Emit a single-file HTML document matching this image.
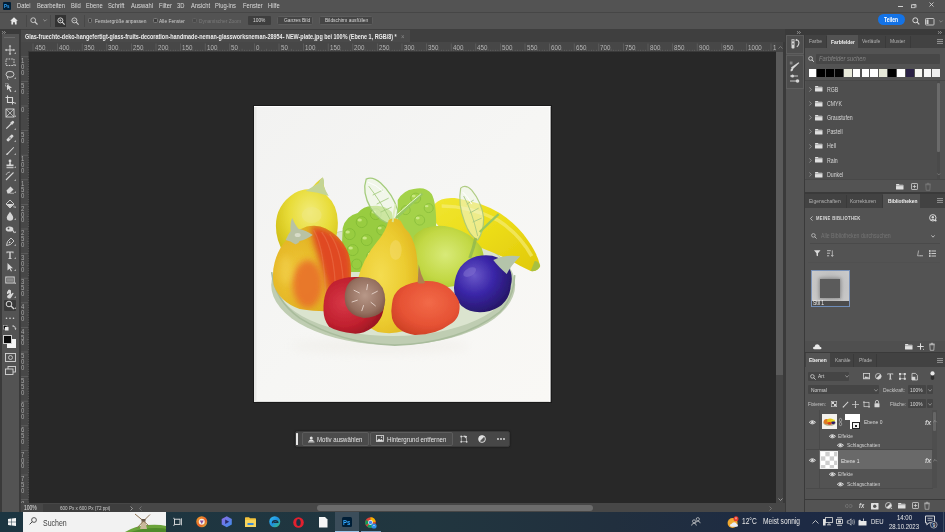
<!DOCTYPE html>
<html><head><meta charset="utf-8">
<style>
*{box-sizing:border-box;margin:0;padding:0}
html,body{width:945px;height:532px;overflow:hidden;background:#282828;font-family:"Liberation Sans",sans-serif;color:#ddd}
.a{position:absolute}
.t{position:absolute;white-space:nowrap;transform:scale(0.1);transform-origin:0 0}
svg{overflow:visible}
</style></head><body>
<div class="a" style="left:0px;top:0px;width:945px;height:12.5px;background:#535353;"></div>
<div class="a" style="left:0px;top:11.8px;width:945px;height:0.9px;background:#464646;"></div>
<div class="a" style="left:2.5px;top:2px;width:8px;height:8px;background:#001e36;border-radius:1px"></div>
<div class="t" style="left:3.6px;top:2.94px;font-size:56.4px;line-height:56.4px;color:#31a8ff;font-weight:bold;transform:scale(0.0780,0.1);">Ps</div>
<div class="t" style="left:16.9px;top:2.47px;font-size:74.4px;line-height:74.4px;color:#dcdcdc;font-weight:normal;transform:scale(0.0780,0.1);">Datei</div>
<div class="t" style="left:36.9px;top:2.47px;font-size:74.4px;line-height:74.4px;color:#dcdcdc;font-weight:normal;transform:scale(0.0780,0.1);">Bearbeiten</div>
<div class="t" style="left:70.8px;top:2.47px;font-size:74.4px;line-height:74.4px;color:#dcdcdc;font-weight:normal;transform:scale(0.0780,0.1);">Bild</div>
<div class="t" style="left:86.4px;top:2.47px;font-size:74.4px;line-height:74.4px;color:#dcdcdc;font-weight:normal;transform:scale(0.0780,0.1);">Ebene</div>
<div class="t" style="left:108.4px;top:2.47px;font-size:74.4px;line-height:74.4px;color:#dcdcdc;font-weight:normal;transform:scale(0.0780,0.1);">Schrift</div>
<div class="t" style="left:130.7px;top:2.47px;font-size:74.4px;line-height:74.4px;color:#dcdcdc;font-weight:normal;transform:scale(0.0780,0.1);">Auswahl</div>
<div class="t" style="left:158.5px;top:2.47px;font-size:74.4px;line-height:74.4px;color:#dcdcdc;font-weight:normal;transform:scale(0.0780,0.1);">Filter</div>
<div class="t" style="left:177px;top:2.47px;font-size:74.4px;line-height:74.4px;color:#dcdcdc;font-weight:normal;transform:scale(0.0780,0.1);">3D</div>
<div class="t" style="left:190.6px;top:2.47px;font-size:74.4px;line-height:74.4px;color:#dcdcdc;font-weight:normal;transform:scale(0.0780,0.1);">Ansicht</div>
<div class="t" style="left:215.2px;top:2.47px;font-size:74.4px;line-height:74.4px;color:#dcdcdc;font-weight:normal;transform:scale(0.0780,0.1);">Plug-ins</div>
<div class="t" style="left:242.8px;top:2.47px;font-size:74.4px;line-height:74.4px;color:#dcdcdc;font-weight:normal;transform:scale(0.0780,0.1);">Fenster</div>
<div class="t" style="left:267.7px;top:2.47px;font-size:74.4px;line-height:74.4px;color:#dcdcdc;font-weight:normal;transform:scale(0.0780,0.1);">Hilfe</div>
<div class="a" style="left:897.5px;top:5.5px;width:5px;height:1px;background:#d0d0d0;"></div>
<svg class="a" style="left:910.5px;top:2.5px;" width="6" height="5" viewBox="0 0 6 5"><path d="M1.5 1.5h3.5v3" fill="none" stroke="#d0d0d0" stroke-width="0.8"/><rect x="0.4" y="1.9" width="3.6" height="2.8" fill="none" stroke="#d0d0d0" stroke-width="0.8"/></svg>
<svg class="a" style="left:929px;top:2px;" width="5" height="5" viewBox="0 0 5 5"><path d="M0.5 0.5L4.5 4.5M4.5 0.5L0.5 4.5" stroke="#d0d0d0" stroke-width="0.9"/></svg>
<div class="a" style="left:0px;top:12.7px;width:945px;height:16.3px;background:#535353;"></div>
<div class="a" style="left:0px;top:28.5px;width:945px;height:1px;background:#3a3a3a;"></div>
<svg class="a" style="left:9.5px;top:16.5px;" width="8" height="8" viewBox="0 0 8 8"><path d="M4 0.3L7.8 3.8H6.6V7.6H4.9V5.2H3.1V7.6H1.4V3.8H0.2Z" fill="#e8e8e8"/></svg>
<div class="a" style="left:25.5px;top:15px;width:1px;height:12px;background:#484848;"></div>
<svg class="a" style="left:30px;top:16.5px;" width="8" height="8" viewBox="0 0 8 8"><circle cx="3.2" cy="3.2" r="2.4" fill="none" stroke="#cfcfcf" stroke-width="0.9"/><path d="M5 5L7.5 7.5" stroke="#cfcfcf" stroke-width="1.1"/></svg>
<svg class="a" style="left:42.5px;top:19px;" width="4" height="3" viewBox="0 0 4 3"><path d="M0.3 0.5L2 2.2L3.7 0.5" fill="none" stroke="#aaa" stroke-width="0.7"/></svg>
<div class="a" style="left:50px;top:15px;width:1px;height:12px;background:#484848;"></div>
<div class="a" style="left:54.5px;top:15px;width:11.5px;height:11.5px;background:#333333;"></div>
<svg class="a" style="left:56.5px;top:17px;" width="8" height="8" viewBox="0 0 8 8"><circle cx="3.4" cy="3.4" r="2.5" fill="none" stroke="#dcdcdc" stroke-width="0.9"/><path d="M5.2 5.2L7.6 7.6" stroke="#dcdcdc" stroke-width="1.1"/><path d="M2.2 3.4H4.6M3.4 2.2V4.6" stroke="#dcdcdc" stroke-width="0.6"/></svg>
<svg class="a" style="left:71px;top:17px;" width="8" height="8" viewBox="0 0 8 8"><circle cx="3.4" cy="3.4" r="2.5" fill="none" stroke="#cfcfcf" stroke-width="0.9"/><path d="M5.2 5.2L7.6 7.6" stroke="#cfcfcf" stroke-width="1.1"/><path d="M2.2 3.4H4.6" stroke="#cfcfcf" stroke-width="0.6"/></svg>
<div class="a" style="left:83.5px;top:15px;width:1px;height:12px;background:#484848;"></div>
<div class="a" style="left:87.6px;top:18px;width:4.8px;height:5px;border:0.7px solid #7a7a7a;border-radius:1.4px;background:#3e3e3e"></div>
<div class="t" style="left:94.5px;top:17.76px;font-size:62.2px;line-height:62.2px;color:#cfcfcf;font-weight:normal;transform:scale(0.0780,0.1);">Fenstergröße anpassen</div>
<div class="a" style="left:152.8px;top:18px;width:4.8px;height:5px;border:0.7px solid #7a7a7a;border-radius:1.4px;background:#3e3e3e"></div>
<div class="t" style="left:159px;top:17.76px;font-size:62.2px;line-height:62.2px;color:#cfcfcf;font-weight:normal;transform:scale(0.0780,0.1);">Alle Fenster</div>
<div class="a" style="left:192.2px;top:18px;width:4.8px;height:5px;border:0.7px solid #606060;border-radius:1.4px;background:#4a4a4a"></div>
<div class="t" style="left:198.5px;top:17.76px;font-size:62.2px;line-height:62.2px;color:#7a7a7a;font-weight:normal;transform:scale(0.0780,0.1);">Dynamischer Zoom</div>
<div class="a" style="left:247.5px;top:16.3px;width:23.5px;height:9px;background:#3e3e3e;border-radius:1px"></div>
<div class="t" style="left:252.8px;top:17.26px;font-size:62.2px;line-height:62.2px;color:#d8d8d8;font-weight:normal;transform:scale(0.0780,0.1);">100%</div>
<div class="a" style="left:276.8px;top:16.3px;width:36.7px;height:9px;background:#454545;border:0.6px solid #5c5c5c;border-radius:1.5px"></div>
<div class="t" style="left:283.5px;top:17.26px;font-size:62.2px;line-height:62.2px;color:#d8d8d8;font-weight:normal;transform:scale(0.0780,0.1);">Ganzes Bild</div>
<div class="a" style="left:319px;top:16.3px;width:53.7px;height:9px;background:#454545;border:0.6px solid #5c5c5c;border-radius:1.5px"></div>
<div class="t" style="left:324.5px;top:17.26px;font-size:62.2px;line-height:62.2px;color:#d8d8d8;font-weight:normal;transform:scale(0.0780,0.1);">Bildschirm ausfüllen</div>
<div class="a" style="left:878px;top:14px;width:27.2px;height:11.4px;background:#1473e6;border-radius:6px"></div>
<div class="t" style="left:884.3px;top:16.77px;font-size:64.1px;line-height:64.1px;color:#ffffff;font-weight:bold;transform:scale(0.0780,0.1);">Teilen</div>
<svg class="a" style="left:911.5px;top:16.5px;" width="8" height="8" viewBox="0 0 8 8"><circle cx="3.3" cy="3.3" r="2.5" fill="none" stroke="#d8d8d8" stroke-width="1"/><path d="M5.1 5.1L7.3 7.3" stroke="#d8d8d8" stroke-width="1.2"/></svg>
<svg class="a" style="left:925px;top:17.5px;" width="9.5" height="7.5" viewBox="0 0 9.5 7.5"><rect x="0.5" y="0.5" width="8.5" height="6.5" rx="0.8" fill="none" stroke="#cfcfcf" stroke-width="0.9"/><rect x="1.5" y="1.5" width="2" height="4.5" fill="#cfcfcf"/></svg>
<svg class="a" style="left:938.5px;top:19.5px;" width="4" height="3" viewBox="0 0 4 3"><path d="M0.3 0.5L2 2.2L3.7 0.5" fill="none" stroke="#9a9a9a" stroke-width="0.7"/></svg>
<div class="a" style="left:20px;top:29px;width:765px;height:13px;background:#3f3f3f;"></div>
<div class="a" style="left:21px;top:29.5px;width:389px;height:12.5px;background:#4a4a4a;"></div>
<div class="t" style="left:25.3px;top:33.19px;font-size:69.7px;line-height:69.7px;color:#ececec;font-weight:bold;transform:scale(0.0780,0.1);">Glas-fruechte-deko-hangefertigt-glass-fruits-decoration-handmade-neman-glassworksneman-28954-&nbsp;NEW-plate.jpg bei 100% (Ebene 1, RGB/8) *</div>
<div class="t" style="left:400.5px;top:32.04px;font-size:76.9px;line-height:76.9px;color:#8a8a8a;font-weight:normal;transform:scale(0.0780,0.1);">×</div>
<div class="a" style="left:20px;top:42px;width:756px;height:10px;background:#474747;"></div>
<div class="a" style="left:20px;top:42px;width:9px;height:462px;background:#474747;"></div>
<div class="a" style="left:29px;top:51px;width:747px;height:1px;background:#3a3a3a;"></div>
<div class="a" style="left:28px;top:51px;width:1px;height:453px;background:#3a3a3a;"></div>
<svg class="a" style="left:0;top:0" width="945" height="532"><rect x="32.60" y="43.5" width="0.8" height="7.5" fill="#606060"/><rect x="35.06" y="49.8" width="0.7" height="1.2" fill="#626262"/><rect x="37.52" y="49.8" width="0.7" height="1.2" fill="#626262"/><rect x="39.98" y="49.8" width="0.7" height="1.2" fill="#626262"/><rect x="42.44" y="49.8" width="0.7" height="1.2" fill="#626262"/><rect x="44.90" y="48.8" width="0.7" height="2.2" fill="#626262"/><rect x="47.36" y="49.8" width="0.7" height="1.2" fill="#626262"/><rect x="49.82" y="49.8" width="0.7" height="1.2" fill="#626262"/><rect x="52.28" y="49.8" width="0.7" height="1.2" fill="#626262"/><rect x="54.74" y="49.8" width="0.7" height="1.2" fill="#626262"/><rect x="57.20" y="43.5" width="0.8" height="7.5" fill="#606060"/><rect x="59.66" y="49.8" width="0.7" height="1.2" fill="#626262"/><rect x="62.12" y="49.8" width="0.7" height="1.2" fill="#626262"/><rect x="64.58" y="49.8" width="0.7" height="1.2" fill="#626262"/><rect x="67.04" y="49.8" width="0.7" height="1.2" fill="#626262"/><rect x="69.50" y="48.8" width="0.7" height="2.2" fill="#626262"/><rect x="71.96" y="49.8" width="0.7" height="1.2" fill="#626262"/><rect x="74.42" y="49.8" width="0.7" height="1.2" fill="#626262"/><rect x="76.88" y="49.8" width="0.7" height="1.2" fill="#626262"/><rect x="79.34" y="49.8" width="0.7" height="1.2" fill="#626262"/><rect x="81.80" y="43.5" width="0.8" height="7.5" fill="#606060"/><rect x="84.26" y="49.8" width="0.7" height="1.2" fill="#626262"/><rect x="86.72" y="49.8" width="0.7" height="1.2" fill="#626262"/><rect x="89.18" y="49.8" width="0.7" height="1.2" fill="#626262"/><rect x="91.64" y="49.8" width="0.7" height="1.2" fill="#626262"/><rect x="94.10" y="48.8" width="0.7" height="2.2" fill="#626262"/><rect x="96.56" y="49.8" width="0.7" height="1.2" fill="#626262"/><rect x="99.02" y="49.8" width="0.7" height="1.2" fill="#626262"/><rect x="101.48" y="49.8" width="0.7" height="1.2" fill="#626262"/><rect x="103.94" y="49.8" width="0.7" height="1.2" fill="#626262"/><rect x="106.40" y="43.5" width="0.8" height="7.5" fill="#606060"/><rect x="108.86" y="49.8" width="0.7" height="1.2" fill="#626262"/><rect x="111.32" y="49.8" width="0.7" height="1.2" fill="#626262"/><rect x="113.78" y="49.8" width="0.7" height="1.2" fill="#626262"/><rect x="116.24" y="49.8" width="0.7" height="1.2" fill="#626262"/><rect x="118.70" y="48.8" width="0.7" height="2.2" fill="#626262"/><rect x="121.16" y="49.8" width="0.7" height="1.2" fill="#626262"/><rect x="123.62" y="49.8" width="0.7" height="1.2" fill="#626262"/><rect x="126.08" y="49.8" width="0.7" height="1.2" fill="#626262"/><rect x="128.54" y="49.8" width="0.7" height="1.2" fill="#626262"/><rect x="131.00" y="43.5" width="0.8" height="7.5" fill="#606060"/><rect x="133.46" y="49.8" width="0.7" height="1.2" fill="#626262"/><rect x="135.92" y="49.8" width="0.7" height="1.2" fill="#626262"/><rect x="138.38" y="49.8" width="0.7" height="1.2" fill="#626262"/><rect x="140.84" y="49.8" width="0.7" height="1.2" fill="#626262"/><rect x="143.30" y="48.8" width="0.7" height="2.2" fill="#626262"/><rect x="145.76" y="49.8" width="0.7" height="1.2" fill="#626262"/><rect x="148.22" y="49.8" width="0.7" height="1.2" fill="#626262"/><rect x="150.68" y="49.8" width="0.7" height="1.2" fill="#626262"/><rect x="153.14" y="49.8" width="0.7" height="1.2" fill="#626262"/><rect x="155.60" y="43.5" width="0.8" height="7.5" fill="#606060"/><rect x="158.06" y="49.8" width="0.7" height="1.2" fill="#626262"/><rect x="160.52" y="49.8" width="0.7" height="1.2" fill="#626262"/><rect x="162.98" y="49.8" width="0.7" height="1.2" fill="#626262"/><rect x="165.44" y="49.8" width="0.7" height="1.2" fill="#626262"/><rect x="167.90" y="48.8" width="0.7" height="2.2" fill="#626262"/><rect x="170.36" y="49.8" width="0.7" height="1.2" fill="#626262"/><rect x="172.82" y="49.8" width="0.7" height="1.2" fill="#626262"/><rect x="175.28" y="49.8" width="0.7" height="1.2" fill="#626262"/><rect x="177.74" y="49.8" width="0.7" height="1.2" fill="#626262"/><rect x="180.20" y="43.5" width="0.8" height="7.5" fill="#606060"/><rect x="182.66" y="49.8" width="0.7" height="1.2" fill="#626262"/><rect x="185.12" y="49.8" width="0.7" height="1.2" fill="#626262"/><rect x="187.58" y="49.8" width="0.7" height="1.2" fill="#626262"/><rect x="190.04" y="49.8" width="0.7" height="1.2" fill="#626262"/><rect x="192.50" y="48.8" width="0.7" height="2.2" fill="#626262"/><rect x="194.96" y="49.8" width="0.7" height="1.2" fill="#626262"/><rect x="197.42" y="49.8" width="0.7" height="1.2" fill="#626262"/><rect x="199.88" y="49.8" width="0.7" height="1.2" fill="#626262"/><rect x="202.34" y="49.8" width="0.7" height="1.2" fill="#626262"/><rect x="204.80" y="43.5" width="0.8" height="7.5" fill="#606060"/><rect x="207.26" y="49.8" width="0.7" height="1.2" fill="#626262"/><rect x="209.72" y="49.8" width="0.7" height="1.2" fill="#626262"/><rect x="212.18" y="49.8" width="0.7" height="1.2" fill="#626262"/><rect x="214.64" y="49.8" width="0.7" height="1.2" fill="#626262"/><rect x="217.10" y="48.8" width="0.7" height="2.2" fill="#626262"/><rect x="219.56" y="49.8" width="0.7" height="1.2" fill="#626262"/><rect x="222.02" y="49.8" width="0.7" height="1.2" fill="#626262"/><rect x="224.48" y="49.8" width="0.7" height="1.2" fill="#626262"/><rect x="226.94" y="49.8" width="0.7" height="1.2" fill="#626262"/><rect x="229.40" y="43.5" width="0.8" height="7.5" fill="#606060"/><rect x="231.86" y="49.8" width="0.7" height="1.2" fill="#626262"/><rect x="234.32" y="49.8" width="0.7" height="1.2" fill="#626262"/><rect x="236.78" y="49.8" width="0.7" height="1.2" fill="#626262"/><rect x="239.24" y="49.8" width="0.7" height="1.2" fill="#626262"/><rect x="241.70" y="48.8" width="0.7" height="2.2" fill="#626262"/><rect x="244.16" y="49.8" width="0.7" height="1.2" fill="#626262"/><rect x="246.62" y="49.8" width="0.7" height="1.2" fill="#626262"/><rect x="249.08" y="49.8" width="0.7" height="1.2" fill="#626262"/><rect x="251.54" y="49.8" width="0.7" height="1.2" fill="#626262"/><rect x="254.00" y="43.5" width="0.8" height="7.5" fill="#606060"/><rect x="256.46" y="49.8" width="0.7" height="1.2" fill="#626262"/><rect x="258.92" y="49.8" width="0.7" height="1.2" fill="#626262"/><rect x="261.38" y="49.8" width="0.7" height="1.2" fill="#626262"/><rect x="263.84" y="49.8" width="0.7" height="1.2" fill="#626262"/><rect x="266.30" y="48.8" width="0.7" height="2.2" fill="#626262"/><rect x="268.76" y="49.8" width="0.7" height="1.2" fill="#626262"/><rect x="271.22" y="49.8" width="0.7" height="1.2" fill="#626262"/><rect x="273.68" y="49.8" width="0.7" height="1.2" fill="#626262"/><rect x="276.14" y="49.8" width="0.7" height="1.2" fill="#626262"/><rect x="278.60" y="43.5" width="0.8" height="7.5" fill="#606060"/><rect x="281.06" y="49.8" width="0.7" height="1.2" fill="#626262"/><rect x="283.52" y="49.8" width="0.7" height="1.2" fill="#626262"/><rect x="285.98" y="49.8" width="0.7" height="1.2" fill="#626262"/><rect x="288.44" y="49.8" width="0.7" height="1.2" fill="#626262"/><rect x="290.90" y="48.8" width="0.7" height="2.2" fill="#626262"/><rect x="293.36" y="49.8" width="0.7" height="1.2" fill="#626262"/><rect x="295.82" y="49.8" width="0.7" height="1.2" fill="#626262"/><rect x="298.28" y="49.8" width="0.7" height="1.2" fill="#626262"/><rect x="300.74" y="49.8" width="0.7" height="1.2" fill="#626262"/><rect x="303.20" y="43.5" width="0.8" height="7.5" fill="#606060"/><rect x="305.66" y="49.8" width="0.7" height="1.2" fill="#626262"/><rect x="308.12" y="49.8" width="0.7" height="1.2" fill="#626262"/><rect x="310.58" y="49.8" width="0.7" height="1.2" fill="#626262"/><rect x="313.04" y="49.8" width="0.7" height="1.2" fill="#626262"/><rect x="315.50" y="48.8" width="0.7" height="2.2" fill="#626262"/><rect x="317.96" y="49.8" width="0.7" height="1.2" fill="#626262"/><rect x="320.42" y="49.8" width="0.7" height="1.2" fill="#626262"/><rect x="322.88" y="49.8" width="0.7" height="1.2" fill="#626262"/><rect x="325.34" y="49.8" width="0.7" height="1.2" fill="#626262"/><rect x="327.80" y="43.5" width="0.8" height="7.5" fill="#606060"/><rect x="330.26" y="49.8" width="0.7" height="1.2" fill="#626262"/><rect x="332.72" y="49.8" width="0.7" height="1.2" fill="#626262"/><rect x="335.18" y="49.8" width="0.7" height="1.2" fill="#626262"/><rect x="337.64" y="49.8" width="0.7" height="1.2" fill="#626262"/><rect x="340.10" y="48.8" width="0.7" height="2.2" fill="#626262"/><rect x="342.56" y="49.8" width="0.7" height="1.2" fill="#626262"/><rect x="345.02" y="49.8" width="0.7" height="1.2" fill="#626262"/><rect x="347.48" y="49.8" width="0.7" height="1.2" fill="#626262"/><rect x="349.94" y="49.8" width="0.7" height="1.2" fill="#626262"/><rect x="352.40" y="43.5" width="0.8" height="7.5" fill="#606060"/><rect x="354.86" y="49.8" width="0.7" height="1.2" fill="#626262"/><rect x="357.32" y="49.8" width="0.7" height="1.2" fill="#626262"/><rect x="359.78" y="49.8" width="0.7" height="1.2" fill="#626262"/><rect x="362.24" y="49.8" width="0.7" height="1.2" fill="#626262"/><rect x="364.70" y="48.8" width="0.7" height="2.2" fill="#626262"/><rect x="367.16" y="49.8" width="0.7" height="1.2" fill="#626262"/><rect x="369.62" y="49.8" width="0.7" height="1.2" fill="#626262"/><rect x="372.08" y="49.8" width="0.7" height="1.2" fill="#626262"/><rect x="374.54" y="49.8" width="0.7" height="1.2" fill="#626262"/><rect x="377.00" y="43.5" width="0.8" height="7.5" fill="#606060"/><rect x="379.46" y="49.8" width="0.7" height="1.2" fill="#626262"/><rect x="381.92" y="49.8" width="0.7" height="1.2" fill="#626262"/><rect x="384.38" y="49.8" width="0.7" height="1.2" fill="#626262"/><rect x="386.84" y="49.8" width="0.7" height="1.2" fill="#626262"/><rect x="389.30" y="48.8" width="0.7" height="2.2" fill="#626262"/><rect x="391.76" y="49.8" width="0.7" height="1.2" fill="#626262"/><rect x="394.22" y="49.8" width="0.7" height="1.2" fill="#626262"/><rect x="396.68" y="49.8" width="0.7" height="1.2" fill="#626262"/><rect x="399.14" y="49.8" width="0.7" height="1.2" fill="#626262"/><rect x="401.60" y="43.5" width="0.8" height="7.5" fill="#606060"/><rect x="404.06" y="49.8" width="0.7" height="1.2" fill="#626262"/><rect x="406.52" y="49.8" width="0.7" height="1.2" fill="#626262"/><rect x="408.98" y="49.8" width="0.7" height="1.2" fill="#626262"/><rect x="411.44" y="49.8" width="0.7" height="1.2" fill="#626262"/><rect x="413.90" y="48.8" width="0.7" height="2.2" fill="#626262"/><rect x="416.36" y="49.8" width="0.7" height="1.2" fill="#626262"/><rect x="418.82" y="49.8" width="0.7" height="1.2" fill="#626262"/><rect x="421.28" y="49.8" width="0.7" height="1.2" fill="#626262"/><rect x="423.74" y="49.8" width="0.7" height="1.2" fill="#626262"/><rect x="426.20" y="43.5" width="0.8" height="7.5" fill="#606060"/><rect x="428.66" y="49.8" width="0.7" height="1.2" fill="#626262"/><rect x="431.12" y="49.8" width="0.7" height="1.2" fill="#626262"/><rect x="433.58" y="49.8" width="0.7" height="1.2" fill="#626262"/><rect x="436.04" y="49.8" width="0.7" height="1.2" fill="#626262"/><rect x="438.50" y="48.8" width="0.7" height="2.2" fill="#626262"/><rect x="440.96" y="49.8" width="0.7" height="1.2" fill="#626262"/><rect x="443.42" y="49.8" width="0.7" height="1.2" fill="#626262"/><rect x="445.88" y="49.8" width="0.7" height="1.2" fill="#626262"/><rect x="448.34" y="49.8" width="0.7" height="1.2" fill="#626262"/><rect x="450.80" y="43.5" width="0.8" height="7.5" fill="#606060"/><rect x="453.26" y="49.8" width="0.7" height="1.2" fill="#626262"/><rect x="455.72" y="49.8" width="0.7" height="1.2" fill="#626262"/><rect x="458.18" y="49.8" width="0.7" height="1.2" fill="#626262"/><rect x="460.64" y="49.8" width="0.7" height="1.2" fill="#626262"/><rect x="463.10" y="48.8" width="0.7" height="2.2" fill="#626262"/><rect x="465.56" y="49.8" width="0.7" height="1.2" fill="#626262"/><rect x="468.02" y="49.8" width="0.7" height="1.2" fill="#626262"/><rect x="470.48" y="49.8" width="0.7" height="1.2" fill="#626262"/><rect x="472.94" y="49.8" width="0.7" height="1.2" fill="#626262"/><rect x="475.40" y="43.5" width="0.8" height="7.5" fill="#606060"/><rect x="477.86" y="49.8" width="0.7" height="1.2" fill="#626262"/><rect x="480.32" y="49.8" width="0.7" height="1.2" fill="#626262"/><rect x="482.78" y="49.8" width="0.7" height="1.2" fill="#626262"/><rect x="485.24" y="49.8" width="0.7" height="1.2" fill="#626262"/><rect x="487.70" y="48.8" width="0.7" height="2.2" fill="#626262"/><rect x="490.16" y="49.8" width="0.7" height="1.2" fill="#626262"/><rect x="492.62" y="49.8" width="0.7" height="1.2" fill="#626262"/><rect x="495.08" y="49.8" width="0.7" height="1.2" fill="#626262"/><rect x="497.54" y="49.8" width="0.7" height="1.2" fill="#626262"/><rect x="500.00" y="43.5" width="0.8" height="7.5" fill="#606060"/><rect x="502.46" y="49.8" width="0.7" height="1.2" fill="#626262"/><rect x="504.92" y="49.8" width="0.7" height="1.2" fill="#626262"/><rect x="507.38" y="49.8" width="0.7" height="1.2" fill="#626262"/><rect x="509.84" y="49.8" width="0.7" height="1.2" fill="#626262"/><rect x="512.30" y="48.8" width="0.7" height="2.2" fill="#626262"/><rect x="514.76" y="49.8" width="0.7" height="1.2" fill="#626262"/><rect x="517.22" y="49.8" width="0.7" height="1.2" fill="#626262"/><rect x="519.68" y="49.8" width="0.7" height="1.2" fill="#626262"/><rect x="522.14" y="49.8" width="0.7" height="1.2" fill="#626262"/><rect x="524.60" y="43.5" width="0.8" height="7.5" fill="#606060"/><rect x="527.06" y="49.8" width="0.7" height="1.2" fill="#626262"/><rect x="529.52" y="49.8" width="0.7" height="1.2" fill="#626262"/><rect x="531.98" y="49.8" width="0.7" height="1.2" fill="#626262"/><rect x="534.44" y="49.8" width="0.7" height="1.2" fill="#626262"/><rect x="536.90" y="48.8" width="0.7" height="2.2" fill="#626262"/><rect x="539.36" y="49.8" width="0.7" height="1.2" fill="#626262"/><rect x="541.82" y="49.8" width="0.7" height="1.2" fill="#626262"/><rect x="544.28" y="49.8" width="0.7" height="1.2" fill="#626262"/><rect x="546.74" y="49.8" width="0.7" height="1.2" fill="#626262"/><rect x="549.20" y="43.5" width="0.8" height="7.5" fill="#606060"/><rect x="551.66" y="49.8" width="0.7" height="1.2" fill="#626262"/><rect x="554.12" y="49.8" width="0.7" height="1.2" fill="#626262"/><rect x="556.58" y="49.8" width="0.7" height="1.2" fill="#626262"/><rect x="559.04" y="49.8" width="0.7" height="1.2" fill="#626262"/><rect x="561.50" y="48.8" width="0.7" height="2.2" fill="#626262"/><rect x="563.96" y="49.8" width="0.7" height="1.2" fill="#626262"/><rect x="566.42" y="49.8" width="0.7" height="1.2" fill="#626262"/><rect x="568.88" y="49.8" width="0.7" height="1.2" fill="#626262"/><rect x="571.34" y="49.8" width="0.7" height="1.2" fill="#626262"/><rect x="573.80" y="43.5" width="0.8" height="7.5" fill="#606060"/><rect x="576.26" y="49.8" width="0.7" height="1.2" fill="#626262"/><rect x="578.72" y="49.8" width="0.7" height="1.2" fill="#626262"/><rect x="581.18" y="49.8" width="0.7" height="1.2" fill="#626262"/><rect x="583.64" y="49.8" width="0.7" height="1.2" fill="#626262"/><rect x="586.10" y="48.8" width="0.7" height="2.2" fill="#626262"/><rect x="588.56" y="49.8" width="0.7" height="1.2" fill="#626262"/><rect x="591.02" y="49.8" width="0.7" height="1.2" fill="#626262"/><rect x="593.48" y="49.8" width="0.7" height="1.2" fill="#626262"/><rect x="595.94" y="49.8" width="0.7" height="1.2" fill="#626262"/><rect x="598.40" y="43.5" width="0.8" height="7.5" fill="#606060"/><rect x="600.86" y="49.8" width="0.7" height="1.2" fill="#626262"/><rect x="603.32" y="49.8" width="0.7" height="1.2" fill="#626262"/><rect x="605.78" y="49.8" width="0.7" height="1.2" fill="#626262"/><rect x="608.24" y="49.8" width="0.7" height="1.2" fill="#626262"/><rect x="610.70" y="48.8" width="0.7" height="2.2" fill="#626262"/><rect x="613.16" y="49.8" width="0.7" height="1.2" fill="#626262"/><rect x="615.62" y="49.8" width="0.7" height="1.2" fill="#626262"/><rect x="618.08" y="49.8" width="0.7" height="1.2" fill="#626262"/><rect x="620.54" y="49.8" width="0.7" height="1.2" fill="#626262"/><rect x="623.00" y="43.5" width="0.8" height="7.5" fill="#606060"/><rect x="625.46" y="49.8" width="0.7" height="1.2" fill="#626262"/><rect x="627.92" y="49.8" width="0.7" height="1.2" fill="#626262"/><rect x="630.38" y="49.8" width="0.7" height="1.2" fill="#626262"/><rect x="632.84" y="49.8" width="0.7" height="1.2" fill="#626262"/><rect x="635.30" y="48.8" width="0.7" height="2.2" fill="#626262"/><rect x="637.76" y="49.8" width="0.7" height="1.2" fill="#626262"/><rect x="640.22" y="49.8" width="0.7" height="1.2" fill="#626262"/><rect x="642.68" y="49.8" width="0.7" height="1.2" fill="#626262"/><rect x="645.14" y="49.8" width="0.7" height="1.2" fill="#626262"/><rect x="647.60" y="43.5" width="0.8" height="7.5" fill="#606060"/><rect x="650.06" y="49.8" width="0.7" height="1.2" fill="#626262"/><rect x="652.52" y="49.8" width="0.7" height="1.2" fill="#626262"/><rect x="654.98" y="49.8" width="0.7" height="1.2" fill="#626262"/><rect x="657.44" y="49.8" width="0.7" height="1.2" fill="#626262"/><rect x="659.90" y="48.8" width="0.7" height="2.2" fill="#626262"/><rect x="662.36" y="49.8" width="0.7" height="1.2" fill="#626262"/><rect x="664.82" y="49.8" width="0.7" height="1.2" fill="#626262"/><rect x="667.28" y="49.8" width="0.7" height="1.2" fill="#626262"/><rect x="669.74" y="49.8" width="0.7" height="1.2" fill="#626262"/><rect x="672.20" y="43.5" width="0.8" height="7.5" fill="#606060"/><rect x="674.66" y="49.8" width="0.7" height="1.2" fill="#626262"/><rect x="677.12" y="49.8" width="0.7" height="1.2" fill="#626262"/><rect x="679.58" y="49.8" width="0.7" height="1.2" fill="#626262"/><rect x="682.04" y="49.8" width="0.7" height="1.2" fill="#626262"/><rect x="684.50" y="48.8" width="0.7" height="2.2" fill="#626262"/><rect x="686.96" y="49.8" width="0.7" height="1.2" fill="#626262"/><rect x="689.42" y="49.8" width="0.7" height="1.2" fill="#626262"/><rect x="691.88" y="49.8" width="0.7" height="1.2" fill="#626262"/><rect x="694.34" y="49.8" width="0.7" height="1.2" fill="#626262"/><rect x="696.80" y="43.5" width="0.8" height="7.5" fill="#606060"/><rect x="699.26" y="49.8" width="0.7" height="1.2" fill="#626262"/><rect x="701.72" y="49.8" width="0.7" height="1.2" fill="#626262"/><rect x="704.18" y="49.8" width="0.7" height="1.2" fill="#626262"/><rect x="706.64" y="49.8" width="0.7" height="1.2" fill="#626262"/><rect x="709.10" y="48.8" width="0.7" height="2.2" fill="#626262"/><rect x="711.56" y="49.8" width="0.7" height="1.2" fill="#626262"/><rect x="714.02" y="49.8" width="0.7" height="1.2" fill="#626262"/><rect x="716.48" y="49.8" width="0.7" height="1.2" fill="#626262"/><rect x="718.94" y="49.8" width="0.7" height="1.2" fill="#626262"/><rect x="721.40" y="43.5" width="0.8" height="7.5" fill="#606060"/><rect x="723.86" y="49.8" width="0.7" height="1.2" fill="#626262"/><rect x="726.32" y="49.8" width="0.7" height="1.2" fill="#626262"/><rect x="728.78" y="49.8" width="0.7" height="1.2" fill="#626262"/><rect x="731.24" y="49.8" width="0.7" height="1.2" fill="#626262"/><rect x="733.70" y="48.8" width="0.7" height="2.2" fill="#626262"/><rect x="736.16" y="49.8" width="0.7" height="1.2" fill="#626262"/><rect x="738.62" y="49.8" width="0.7" height="1.2" fill="#626262"/><rect x="741.08" y="49.8" width="0.7" height="1.2" fill="#626262"/><rect x="743.54" y="49.8" width="0.7" height="1.2" fill="#626262"/><rect x="746.00" y="43.5" width="0.8" height="7.5" fill="#606060"/><rect x="748.46" y="49.8" width="0.7" height="1.2" fill="#626262"/><rect x="750.92" y="49.8" width="0.7" height="1.2" fill="#626262"/><rect x="753.38" y="49.8" width="0.7" height="1.2" fill="#626262"/><rect x="755.84" y="49.8" width="0.7" height="1.2" fill="#626262"/><rect x="758.30" y="48.8" width="0.7" height="2.2" fill="#626262"/><rect x="760.76" y="49.8" width="0.7" height="1.2" fill="#626262"/><rect x="763.22" y="49.8" width="0.7" height="1.2" fill="#626262"/><rect x="765.68" y="49.8" width="0.7" height="1.2" fill="#626262"/><rect x="768.14" y="49.8" width="0.7" height="1.2" fill="#626262"/><rect x="770.60" y="43.5" width="0.8" height="7.5" fill="#606060"/><rect x="773.06" y="49.8" width="0.7" height="1.2" fill="#626262"/><rect x="775.52" y="49.8" width="0.7" height="1.2" fill="#626262"/><rect x="20.5" y="56.40" width="8" height="0.8" fill="#606060"/><rect x="27.8" y="58.86" width="1.2" height="0.7" fill="#626262"/><rect x="27.8" y="61.32" width="1.2" height="0.7" fill="#626262"/><rect x="27.8" y="63.78" width="1.2" height="0.7" fill="#626262"/><rect x="27.8" y="66.24" width="1.2" height="0.7" fill="#626262"/><rect x="26.8" y="68.70" width="2.2" height="0.7" fill="#626262"/><rect x="27.8" y="71.16" width="1.2" height="0.7" fill="#626262"/><rect x="27.8" y="73.62" width="1.2" height="0.7" fill="#626262"/><rect x="27.8" y="76.08" width="1.2" height="0.7" fill="#626262"/><rect x="27.8" y="78.54" width="1.2" height="0.7" fill="#626262"/><rect x="20.5" y="81.00" width="8" height="0.8" fill="#606060"/><rect x="27.8" y="83.46" width="1.2" height="0.7" fill="#626262"/><rect x="27.8" y="85.92" width="1.2" height="0.7" fill="#626262"/><rect x="27.8" y="88.38" width="1.2" height="0.7" fill="#626262"/><rect x="27.8" y="90.84" width="1.2" height="0.7" fill="#626262"/><rect x="26.8" y="93.30" width="2.2" height="0.7" fill="#626262"/><rect x="27.8" y="95.76" width="1.2" height="0.7" fill="#626262"/><rect x="27.8" y="98.22" width="1.2" height="0.7" fill="#626262"/><rect x="27.8" y="100.68" width="1.2" height="0.7" fill="#626262"/><rect x="27.8" y="103.14" width="1.2" height="0.7" fill="#626262"/><rect x="20.5" y="105.60" width="8" height="0.8" fill="#606060"/><rect x="27.8" y="108.06" width="1.2" height="0.7" fill="#626262"/><rect x="27.8" y="110.52" width="1.2" height="0.7" fill="#626262"/><rect x="27.8" y="112.98" width="1.2" height="0.7" fill="#626262"/><rect x="27.8" y="115.44" width="1.2" height="0.7" fill="#626262"/><rect x="26.8" y="117.90" width="2.2" height="0.7" fill="#626262"/><rect x="27.8" y="120.36" width="1.2" height="0.7" fill="#626262"/><rect x="27.8" y="122.82" width="1.2" height="0.7" fill="#626262"/><rect x="27.8" y="125.28" width="1.2" height="0.7" fill="#626262"/><rect x="27.8" y="127.74" width="1.2" height="0.7" fill="#626262"/><rect x="20.5" y="130.20" width="8" height="0.8" fill="#606060"/><rect x="27.8" y="132.66" width="1.2" height="0.7" fill="#626262"/><rect x="27.8" y="135.12" width="1.2" height="0.7" fill="#626262"/><rect x="27.8" y="137.58" width="1.2" height="0.7" fill="#626262"/><rect x="27.8" y="140.04" width="1.2" height="0.7" fill="#626262"/><rect x="26.8" y="142.50" width="2.2" height="0.7" fill="#626262"/><rect x="27.8" y="144.96" width="1.2" height="0.7" fill="#626262"/><rect x="27.8" y="147.42" width="1.2" height="0.7" fill="#626262"/><rect x="27.8" y="149.88" width="1.2" height="0.7" fill="#626262"/><rect x="27.8" y="152.34" width="1.2" height="0.7" fill="#626262"/><rect x="20.5" y="154.80" width="8" height="0.8" fill="#606060"/><rect x="27.8" y="157.26" width="1.2" height="0.7" fill="#626262"/><rect x="27.8" y="159.72" width="1.2" height="0.7" fill="#626262"/><rect x="27.8" y="162.18" width="1.2" height="0.7" fill="#626262"/><rect x="27.8" y="164.64" width="1.2" height="0.7" fill="#626262"/><rect x="26.8" y="167.10" width="2.2" height="0.7" fill="#626262"/><rect x="27.8" y="169.56" width="1.2" height="0.7" fill="#626262"/><rect x="27.8" y="172.02" width="1.2" height="0.7" fill="#626262"/><rect x="27.8" y="174.48" width="1.2" height="0.7" fill="#626262"/><rect x="27.8" y="176.94" width="1.2" height="0.7" fill="#626262"/><rect x="20.5" y="179.40" width="8" height="0.8" fill="#606060"/><rect x="27.8" y="181.86" width="1.2" height="0.7" fill="#626262"/><rect x="27.8" y="184.32" width="1.2" height="0.7" fill="#626262"/><rect x="27.8" y="186.78" width="1.2" height="0.7" fill="#626262"/><rect x="27.8" y="189.24" width="1.2" height="0.7" fill="#626262"/><rect x="26.8" y="191.70" width="2.2" height="0.7" fill="#626262"/><rect x="27.8" y="194.16" width="1.2" height="0.7" fill="#626262"/><rect x="27.8" y="196.62" width="1.2" height="0.7" fill="#626262"/><rect x="27.8" y="199.08" width="1.2" height="0.7" fill="#626262"/><rect x="27.8" y="201.54" width="1.2" height="0.7" fill="#626262"/><rect x="20.5" y="204.00" width="8" height="0.8" fill="#606060"/><rect x="27.8" y="206.46" width="1.2" height="0.7" fill="#626262"/><rect x="27.8" y="208.92" width="1.2" height="0.7" fill="#626262"/><rect x="27.8" y="211.38" width="1.2" height="0.7" fill="#626262"/><rect x="27.8" y="213.84" width="1.2" height="0.7" fill="#626262"/><rect x="26.8" y="216.30" width="2.2" height="0.7" fill="#626262"/><rect x="27.8" y="218.76" width="1.2" height="0.7" fill="#626262"/><rect x="27.8" y="221.22" width="1.2" height="0.7" fill="#626262"/><rect x="27.8" y="223.68" width="1.2" height="0.7" fill="#626262"/><rect x="27.8" y="226.14" width="1.2" height="0.7" fill="#626262"/><rect x="20.5" y="228.60" width="8" height="0.8" fill="#606060"/><rect x="27.8" y="231.06" width="1.2" height="0.7" fill="#626262"/><rect x="27.8" y="233.52" width="1.2" height="0.7" fill="#626262"/><rect x="27.8" y="235.98" width="1.2" height="0.7" fill="#626262"/><rect x="27.8" y="238.44" width="1.2" height="0.7" fill="#626262"/><rect x="26.8" y="240.90" width="2.2" height="0.7" fill="#626262"/><rect x="27.8" y="243.36" width="1.2" height="0.7" fill="#626262"/><rect x="27.8" y="245.82" width="1.2" height="0.7" fill="#626262"/><rect x="27.8" y="248.28" width="1.2" height="0.7" fill="#626262"/><rect x="27.8" y="250.74" width="1.2" height="0.7" fill="#626262"/><rect x="20.5" y="253.20" width="8" height="0.8" fill="#606060"/><rect x="27.8" y="255.66" width="1.2" height="0.7" fill="#626262"/><rect x="27.8" y="258.12" width="1.2" height="0.7" fill="#626262"/><rect x="27.8" y="260.58" width="1.2" height="0.7" fill="#626262"/><rect x="27.8" y="263.04" width="1.2" height="0.7" fill="#626262"/><rect x="26.8" y="265.50" width="2.2" height="0.7" fill="#626262"/><rect x="27.8" y="267.96" width="1.2" height="0.7" fill="#626262"/><rect x="27.8" y="270.42" width="1.2" height="0.7" fill="#626262"/><rect x="27.8" y="272.88" width="1.2" height="0.7" fill="#626262"/><rect x="27.8" y="275.34" width="1.2" height="0.7" fill="#626262"/><rect x="20.5" y="277.80" width="8" height="0.8" fill="#606060"/><rect x="27.8" y="280.26" width="1.2" height="0.7" fill="#626262"/><rect x="27.8" y="282.72" width="1.2" height="0.7" fill="#626262"/><rect x="27.8" y="285.18" width="1.2" height="0.7" fill="#626262"/><rect x="27.8" y="287.64" width="1.2" height="0.7" fill="#626262"/><rect x="26.8" y="290.10" width="2.2" height="0.7" fill="#626262"/><rect x="27.8" y="292.56" width="1.2" height="0.7" fill="#626262"/><rect x="27.8" y="295.02" width="1.2" height="0.7" fill="#626262"/><rect x="27.8" y="297.48" width="1.2" height="0.7" fill="#626262"/><rect x="27.8" y="299.94" width="1.2" height="0.7" fill="#626262"/><rect x="20.5" y="302.40" width="8" height="0.8" fill="#606060"/><rect x="27.8" y="304.86" width="1.2" height="0.7" fill="#626262"/><rect x="27.8" y="307.32" width="1.2" height="0.7" fill="#626262"/><rect x="27.8" y="309.78" width="1.2" height="0.7" fill="#626262"/><rect x="27.8" y="312.24" width="1.2" height="0.7" fill="#626262"/><rect x="26.8" y="314.70" width="2.2" height="0.7" fill="#626262"/><rect x="27.8" y="317.16" width="1.2" height="0.7" fill="#626262"/><rect x="27.8" y="319.62" width="1.2" height="0.7" fill="#626262"/><rect x="27.8" y="322.08" width="1.2" height="0.7" fill="#626262"/><rect x="27.8" y="324.54" width="1.2" height="0.7" fill="#626262"/><rect x="20.5" y="327.00" width="8" height="0.8" fill="#606060"/><rect x="27.8" y="329.46" width="1.2" height="0.7" fill="#626262"/><rect x="27.8" y="331.92" width="1.2" height="0.7" fill="#626262"/><rect x="27.8" y="334.38" width="1.2" height="0.7" fill="#626262"/><rect x="27.8" y="336.84" width="1.2" height="0.7" fill="#626262"/><rect x="26.8" y="339.30" width="2.2" height="0.7" fill="#626262"/><rect x="27.8" y="341.76" width="1.2" height="0.7" fill="#626262"/><rect x="27.8" y="344.22" width="1.2" height="0.7" fill="#626262"/><rect x="27.8" y="346.68" width="1.2" height="0.7" fill="#626262"/><rect x="27.8" y="349.14" width="1.2" height="0.7" fill="#626262"/><rect x="20.5" y="351.60" width="8" height="0.8" fill="#606060"/><rect x="27.8" y="354.06" width="1.2" height="0.7" fill="#626262"/><rect x="27.8" y="356.52" width="1.2" height="0.7" fill="#626262"/><rect x="27.8" y="358.98" width="1.2" height="0.7" fill="#626262"/><rect x="27.8" y="361.44" width="1.2" height="0.7" fill="#626262"/><rect x="26.8" y="363.90" width="2.2" height="0.7" fill="#626262"/><rect x="27.8" y="366.36" width="1.2" height="0.7" fill="#626262"/><rect x="27.8" y="368.82" width="1.2" height="0.7" fill="#626262"/><rect x="27.8" y="371.28" width="1.2" height="0.7" fill="#626262"/><rect x="27.8" y="373.74" width="1.2" height="0.7" fill="#626262"/><rect x="20.5" y="376.20" width="8" height="0.8" fill="#606060"/><rect x="27.8" y="378.66" width="1.2" height="0.7" fill="#626262"/><rect x="27.8" y="381.12" width="1.2" height="0.7" fill="#626262"/><rect x="27.8" y="383.58" width="1.2" height="0.7" fill="#626262"/><rect x="27.8" y="386.04" width="1.2" height="0.7" fill="#626262"/><rect x="26.8" y="388.50" width="2.2" height="0.7" fill="#626262"/><rect x="27.8" y="390.96" width="1.2" height="0.7" fill="#626262"/><rect x="27.8" y="393.42" width="1.2" height="0.7" fill="#626262"/><rect x="27.8" y="395.88" width="1.2" height="0.7" fill="#626262"/><rect x="27.8" y="398.34" width="1.2" height="0.7" fill="#626262"/><rect x="20.5" y="400.80" width="8" height="0.8" fill="#606060"/><rect x="27.8" y="403.26" width="1.2" height="0.7" fill="#626262"/><rect x="27.8" y="405.72" width="1.2" height="0.7" fill="#626262"/><rect x="27.8" y="408.18" width="1.2" height="0.7" fill="#626262"/><rect x="27.8" y="410.64" width="1.2" height="0.7" fill="#626262"/><rect x="26.8" y="413.10" width="2.2" height="0.7" fill="#626262"/><rect x="27.8" y="415.56" width="1.2" height="0.7" fill="#626262"/><rect x="27.8" y="418.02" width="1.2" height="0.7" fill="#626262"/><rect x="27.8" y="420.48" width="1.2" height="0.7" fill="#626262"/><rect x="27.8" y="422.94" width="1.2" height="0.7" fill="#626262"/><rect x="20.5" y="425.40" width="8" height="0.8" fill="#606060"/><rect x="27.8" y="427.86" width="1.2" height="0.7" fill="#626262"/><rect x="27.8" y="430.32" width="1.2" height="0.7" fill="#626262"/><rect x="27.8" y="432.78" width="1.2" height="0.7" fill="#626262"/><rect x="27.8" y="435.24" width="1.2" height="0.7" fill="#626262"/><rect x="26.8" y="437.70" width="2.2" height="0.7" fill="#626262"/><rect x="27.8" y="440.16" width="1.2" height="0.7" fill="#626262"/><rect x="27.8" y="442.62" width="1.2" height="0.7" fill="#626262"/><rect x="27.8" y="445.08" width="1.2" height="0.7" fill="#626262"/><rect x="27.8" y="447.54" width="1.2" height="0.7" fill="#626262"/><rect x="20.5" y="450.00" width="8" height="0.8" fill="#606060"/><rect x="27.8" y="452.46" width="1.2" height="0.7" fill="#626262"/><rect x="27.8" y="454.92" width="1.2" height="0.7" fill="#626262"/><rect x="27.8" y="457.38" width="1.2" height="0.7" fill="#626262"/><rect x="27.8" y="459.84" width="1.2" height="0.7" fill="#626262"/><rect x="26.8" y="462.30" width="2.2" height="0.7" fill="#626262"/><rect x="27.8" y="464.76" width="1.2" height="0.7" fill="#626262"/><rect x="27.8" y="467.22" width="1.2" height="0.7" fill="#626262"/><rect x="27.8" y="469.68" width="1.2" height="0.7" fill="#626262"/><rect x="27.8" y="472.14" width="1.2" height="0.7" fill="#626262"/><rect x="20.5" y="474.60" width="8" height="0.8" fill="#606060"/><rect x="27.8" y="477.06" width="1.2" height="0.7" fill="#626262"/><rect x="27.8" y="479.52" width="1.2" height="0.7" fill="#626262"/><rect x="27.8" y="481.98" width="1.2" height="0.7" fill="#626262"/><rect x="27.8" y="484.44" width="1.2" height="0.7" fill="#626262"/><rect x="26.8" y="486.90" width="2.2" height="0.7" fill="#626262"/><rect x="27.8" y="489.36" width="1.2" height="0.7" fill="#626262"/><rect x="27.8" y="491.82" width="1.2" height="0.7" fill="#626262"/><rect x="27.8" y="494.28" width="1.2" height="0.7" fill="#626262"/><rect x="27.8" y="496.74" width="1.2" height="0.7" fill="#626262"/><rect x="20.5" y="499.20" width="8" height="0.8" fill="#606060"/><rect x="27.8" y="501.66" width="1.2" height="0.7" fill="#626262"/></svg>
<div class="t" style="left:34.50000000000001px;top:42.52px;font-size:79.5px;line-height:79.5px;color:#b4b4b4;font-weight:normal;transform:scale(0.0780,0.1);">450</div>
<div class="t" style="left:59.1px;top:42.52px;font-size:79.5px;line-height:79.5px;color:#b4b4b4;font-weight:normal;transform:scale(0.0780,0.1);">400</div>
<div class="t" style="left:83.69999999999999px;top:42.52px;font-size:79.5px;line-height:79.5px;color:#b4b4b4;font-weight:normal;transform:scale(0.0780,0.1);">350</div>
<div class="t" style="left:108.29999999999998px;top:42.52px;font-size:79.5px;line-height:79.5px;color:#b4b4b4;font-weight:normal;transform:scale(0.0780,0.1);">300</div>
<div class="t" style="left:132.9px;top:42.52px;font-size:79.5px;line-height:79.5px;color:#b4b4b4;font-weight:normal;transform:scale(0.0780,0.1);">250</div>
<div class="t" style="left:157.5px;top:42.52px;font-size:79.5px;line-height:79.5px;color:#b4b4b4;font-weight:normal;transform:scale(0.0780,0.1);">200</div>
<div class="t" style="left:182.1px;top:42.52px;font-size:79.5px;line-height:79.5px;color:#b4b4b4;font-weight:normal;transform:scale(0.0780,0.1);">150</div>
<div class="t" style="left:206.70000000000002px;top:42.52px;font-size:79.5px;line-height:79.5px;color:#b4b4b4;font-weight:normal;transform:scale(0.0780,0.1);">100</div>
<div class="t" style="left:231.3px;top:42.52px;font-size:79.5px;line-height:79.5px;color:#b4b4b4;font-weight:normal;transform:scale(0.0780,0.1);">50</div>
<div class="t" style="left:255.9px;top:42.52px;font-size:79.5px;line-height:79.5px;color:#b4b4b4;font-weight:normal;transform:scale(0.0780,0.1);">0</div>
<div class="t" style="left:280.50000000000006px;top:42.52px;font-size:79.5px;line-height:79.5px;color:#b4b4b4;font-weight:normal;transform:scale(0.0780,0.1);">50</div>
<div class="t" style="left:305.1px;top:42.52px;font-size:79.5px;line-height:79.5px;color:#b4b4b4;font-weight:normal;transform:scale(0.0780,0.1);">100</div>
<div class="t" style="left:329.70000000000005px;top:42.52px;font-size:79.5px;line-height:79.5px;color:#b4b4b4;font-weight:normal;transform:scale(0.0780,0.1);">150</div>
<div class="t" style="left:354.30000000000007px;top:42.52px;font-size:79.5px;line-height:79.5px;color:#b4b4b4;font-weight:normal;transform:scale(0.0780,0.1);">200</div>
<div class="t" style="left:378.90000000000003px;top:42.52px;font-size:79.5px;line-height:79.5px;color:#b4b4b4;font-weight:normal;transform:scale(0.0780,0.1);">250</div>
<div class="t" style="left:403.50000000000006px;top:42.52px;font-size:79.5px;line-height:79.5px;color:#b4b4b4;font-weight:normal;transform:scale(0.0780,0.1);">300</div>
<div class="t" style="left:428.1px;top:42.52px;font-size:79.5px;line-height:79.5px;color:#b4b4b4;font-weight:normal;transform:scale(0.0780,0.1);">350</div>
<div class="t" style="left:452.70000000000005px;top:42.52px;font-size:79.5px;line-height:79.5px;color:#b4b4b4;font-weight:normal;transform:scale(0.0780,0.1);">400</div>
<div class="t" style="left:477.30000000000007px;top:42.52px;font-size:79.5px;line-height:79.5px;color:#b4b4b4;font-weight:normal;transform:scale(0.0780,0.1);">450</div>
<div class="t" style="left:501.90000000000003px;top:42.52px;font-size:79.5px;line-height:79.5px;color:#b4b4b4;font-weight:normal;transform:scale(0.0780,0.1);">500</div>
<div class="t" style="left:526.5000000000001px;top:42.52px;font-size:79.5px;line-height:79.5px;color:#b4b4b4;font-weight:normal;transform:scale(0.0780,0.1);">550</div>
<div class="t" style="left:551.1px;top:42.52px;font-size:79.5px;line-height:79.5px;color:#b4b4b4;font-weight:normal;transform:scale(0.0780,0.1);">600</div>
<div class="t" style="left:575.7px;top:42.52px;font-size:79.5px;line-height:79.5px;color:#b4b4b4;font-weight:normal;transform:scale(0.0780,0.1);">650</div>
<div class="t" style="left:600.3000000000001px;top:42.52px;font-size:79.5px;line-height:79.5px;color:#b4b4b4;font-weight:normal;transform:scale(0.0780,0.1);">700</div>
<div class="t" style="left:624.9px;top:42.52px;font-size:79.5px;line-height:79.5px;color:#b4b4b4;font-weight:normal;transform:scale(0.0780,0.1);">750</div>
<div class="t" style="left:649.5000000000001px;top:42.52px;font-size:79.5px;line-height:79.5px;color:#b4b4b4;font-weight:normal;transform:scale(0.0780,0.1);">800</div>
<div class="t" style="left:674.1px;top:42.52px;font-size:79.5px;line-height:79.5px;color:#b4b4b4;font-weight:normal;transform:scale(0.0780,0.1);">850</div>
<div class="t" style="left:698.7px;top:42.52px;font-size:79.5px;line-height:79.5px;color:#b4b4b4;font-weight:normal;transform:scale(0.0780,0.1);">900</div>
<div class="t" style="left:723.3000000000001px;top:42.52px;font-size:79.5px;line-height:79.5px;color:#b4b4b4;font-weight:normal;transform:scale(0.0780,0.1);">950</div>
<div class="t" style="left:747.9px;top:42.52px;font-size:79.5px;line-height:79.5px;color:#b4b4b4;font-weight:normal;transform:scale(0.0780,0.1);">1000</div>
<div class="t" style="left:772.5000000000001px;top:42.52px;font-size:79.5px;line-height:79.5px;color:#b4b4b4;font-weight:normal;transform:scale(0.0780,0.1);">1050</div>
<div class="t" style="left:21.1px;top:57.02px;font-size:68.2px;line-height:68.2px;color:#a8a8a8;font-weight:normal;transform:scale(0.0880,0.1);">1</div>
<div class="t" style="left:21.1px;top:62.92px;font-size:68.2px;line-height:68.2px;color:#a8a8a8;font-weight:normal;transform:scale(0.0880,0.1);">0</div>
<div class="t" style="left:21.1px;top:68.82px;font-size:68.2px;line-height:68.2px;color:#a8a8a8;font-weight:normal;transform:scale(0.0880,0.1);">0</div>
<div class="t" style="left:21.1px;top:81.62px;font-size:68.2px;line-height:68.2px;color:#a8a8a8;font-weight:normal;transform:scale(0.0880,0.1);">5</div>
<div class="t" style="left:21.1px;top:87.52px;font-size:68.2px;line-height:68.2px;color:#a8a8a8;font-weight:normal;transform:scale(0.0880,0.1);">0</div>
<div class="t" style="left:21.1px;top:106.22px;font-size:68.2px;line-height:68.2px;color:#a8a8a8;font-weight:normal;transform:scale(0.0880,0.1);">0</div>
<div class="t" style="left:21.1px;top:130.82px;font-size:68.2px;line-height:68.2px;color:#a8a8a8;font-weight:normal;transform:scale(0.0880,0.1);">5</div>
<div class="t" style="left:21.1px;top:136.72px;font-size:68.2px;line-height:68.2px;color:#a8a8a8;font-weight:normal;transform:scale(0.0880,0.1);">0</div>
<div class="t" style="left:21.1px;top:155.42px;font-size:68.2px;line-height:68.2px;color:#a8a8a8;font-weight:normal;transform:scale(0.0880,0.1);">1</div>
<div class="t" style="left:21.1px;top:161.32px;font-size:68.2px;line-height:68.2px;color:#a8a8a8;font-weight:normal;transform:scale(0.0880,0.1);">0</div>
<div class="t" style="left:21.1px;top:167.22px;font-size:68.2px;line-height:68.2px;color:#a8a8a8;font-weight:normal;transform:scale(0.0880,0.1);">0</div>
<div class="t" style="left:21.1px;top:180.02px;font-size:68.2px;line-height:68.2px;color:#a8a8a8;font-weight:normal;transform:scale(0.0880,0.1);">1</div>
<div class="t" style="left:21.1px;top:185.92px;font-size:68.2px;line-height:68.2px;color:#a8a8a8;font-weight:normal;transform:scale(0.0880,0.1);">5</div>
<div class="t" style="left:21.1px;top:191.82px;font-size:68.2px;line-height:68.2px;color:#a8a8a8;font-weight:normal;transform:scale(0.0880,0.1);">0</div>
<div class="t" style="left:21.1px;top:204.62px;font-size:68.2px;line-height:68.2px;color:#a8a8a8;font-weight:normal;transform:scale(0.0880,0.1);">2</div>
<div class="t" style="left:21.1px;top:210.52px;font-size:68.2px;line-height:68.2px;color:#a8a8a8;font-weight:normal;transform:scale(0.0880,0.1);">0</div>
<div class="t" style="left:21.1px;top:216.42px;font-size:68.2px;line-height:68.2px;color:#a8a8a8;font-weight:normal;transform:scale(0.0880,0.1);">0</div>
<div class="t" style="left:21.1px;top:229.22px;font-size:68.2px;line-height:68.2px;color:#a8a8a8;font-weight:normal;transform:scale(0.0880,0.1);">2</div>
<div class="t" style="left:21.1px;top:235.12px;font-size:68.2px;line-height:68.2px;color:#a8a8a8;font-weight:normal;transform:scale(0.0880,0.1);">5</div>
<div class="t" style="left:21.1px;top:241.02px;font-size:68.2px;line-height:68.2px;color:#a8a8a8;font-weight:normal;transform:scale(0.0880,0.1);">0</div>
<div class="t" style="left:21.1px;top:253.82px;font-size:68.2px;line-height:68.2px;color:#a8a8a8;font-weight:normal;transform:scale(0.0880,0.1);">3</div>
<div class="t" style="left:21.1px;top:259.72px;font-size:68.2px;line-height:68.2px;color:#a8a8a8;font-weight:normal;transform:scale(0.0880,0.1);">0</div>
<div class="t" style="left:21.1px;top:265.62px;font-size:68.2px;line-height:68.2px;color:#a8a8a8;font-weight:normal;transform:scale(0.0880,0.1);">0</div>
<div class="t" style="left:21.1px;top:278.42px;font-size:68.2px;line-height:68.2px;color:#a8a8a8;font-weight:normal;transform:scale(0.0880,0.1);">3</div>
<div class="t" style="left:21.1px;top:284.32px;font-size:68.2px;line-height:68.2px;color:#a8a8a8;font-weight:normal;transform:scale(0.0880,0.1);">5</div>
<div class="t" style="left:21.1px;top:290.22px;font-size:68.2px;line-height:68.2px;color:#a8a8a8;font-weight:normal;transform:scale(0.0880,0.1);">0</div>
<div class="t" style="left:21.1px;top:303.02px;font-size:68.2px;line-height:68.2px;color:#a8a8a8;font-weight:normal;transform:scale(0.0880,0.1);">4</div>
<div class="t" style="left:21.1px;top:308.92px;font-size:68.2px;line-height:68.2px;color:#a8a8a8;font-weight:normal;transform:scale(0.0880,0.1);">0</div>
<div class="t" style="left:21.1px;top:314.82px;font-size:68.2px;line-height:68.2px;color:#a8a8a8;font-weight:normal;transform:scale(0.0880,0.1);">0</div>
<div class="t" style="left:21.1px;top:327.62px;font-size:68.2px;line-height:68.2px;color:#a8a8a8;font-weight:normal;transform:scale(0.0880,0.1);">4</div>
<div class="t" style="left:21.1px;top:333.52px;font-size:68.2px;line-height:68.2px;color:#a8a8a8;font-weight:normal;transform:scale(0.0880,0.1);">5</div>
<div class="t" style="left:21.1px;top:339.42px;font-size:68.2px;line-height:68.2px;color:#a8a8a8;font-weight:normal;transform:scale(0.0880,0.1);">0</div>
<div class="t" style="left:21.1px;top:352.22px;font-size:68.2px;line-height:68.2px;color:#a8a8a8;font-weight:normal;transform:scale(0.0880,0.1);">5</div>
<div class="t" style="left:21.1px;top:358.12px;font-size:68.2px;line-height:68.2px;color:#a8a8a8;font-weight:normal;transform:scale(0.0880,0.1);">0</div>
<div class="t" style="left:21.1px;top:364.02px;font-size:68.2px;line-height:68.2px;color:#a8a8a8;font-weight:normal;transform:scale(0.0880,0.1);">0</div>
<div class="t" style="left:21.1px;top:376.82px;font-size:68.2px;line-height:68.2px;color:#a8a8a8;font-weight:normal;transform:scale(0.0880,0.1);">5</div>
<div class="t" style="left:21.1px;top:382.72px;font-size:68.2px;line-height:68.2px;color:#a8a8a8;font-weight:normal;transform:scale(0.0880,0.1);">5</div>
<div class="t" style="left:21.1px;top:388.62px;font-size:68.2px;line-height:68.2px;color:#a8a8a8;font-weight:normal;transform:scale(0.0880,0.1);">0</div>
<div class="t" style="left:21.1px;top:401.42px;font-size:68.2px;line-height:68.2px;color:#a8a8a8;font-weight:normal;transform:scale(0.0880,0.1);">6</div>
<div class="t" style="left:21.1px;top:407.32px;font-size:68.2px;line-height:68.2px;color:#a8a8a8;font-weight:normal;transform:scale(0.0880,0.1);">0</div>
<div class="t" style="left:21.1px;top:413.22px;font-size:68.2px;line-height:68.2px;color:#a8a8a8;font-weight:normal;transform:scale(0.0880,0.1);">0</div>
<div class="t" style="left:21.1px;top:426.02px;font-size:68.2px;line-height:68.2px;color:#a8a8a8;font-weight:normal;transform:scale(0.0880,0.1);">6</div>
<div class="t" style="left:21.1px;top:431.92px;font-size:68.2px;line-height:68.2px;color:#a8a8a8;font-weight:normal;transform:scale(0.0880,0.1);">5</div>
<div class="t" style="left:21.1px;top:437.82px;font-size:68.2px;line-height:68.2px;color:#a8a8a8;font-weight:normal;transform:scale(0.0880,0.1);">0</div>
<div class="t" style="left:21.1px;top:450.62px;font-size:68.2px;line-height:68.2px;color:#a8a8a8;font-weight:normal;transform:scale(0.0880,0.1);">7</div>
<div class="t" style="left:21.1px;top:456.52px;font-size:68.2px;line-height:68.2px;color:#a8a8a8;font-weight:normal;transform:scale(0.0880,0.1);">0</div>
<div class="t" style="left:21.1px;top:462.42px;font-size:68.2px;line-height:68.2px;color:#a8a8a8;font-weight:normal;transform:scale(0.0880,0.1);">0</div>
<div class="t" style="left:21.1px;top:475.22px;font-size:68.2px;line-height:68.2px;color:#a8a8a8;font-weight:normal;transform:scale(0.0880,0.1);">7</div>
<div class="t" style="left:21.1px;top:481.12px;font-size:68.2px;line-height:68.2px;color:#a8a8a8;font-weight:normal;transform:scale(0.0880,0.1);">5</div>
<div class="t" style="left:21.1px;top:487.02px;font-size:68.2px;line-height:68.2px;color:#a8a8a8;font-weight:normal;transform:scale(0.0880,0.1);">0</div>
<div class="t" style="left:21.1px;top:499.82px;font-size:68.2px;line-height:68.2px;color:#a8a8a8;font-weight:normal;transform:scale(0.0880,0.1);">8</div>
<div class="t" style="left:21.1px;top:505.72px;font-size:68.2px;line-height:68.2px;color:#a8a8a8;font-weight:normal;transform:scale(0.0880,0.1);">0</div>
<div class="t" style="left:21.1px;top:511.62px;font-size:68.2px;line-height:68.2px;color:#a8a8a8;font-weight:normal;transform:scale(0.0880,0.1);">0</div>
<div class="a" style="left:776px;top:42px;width:9px;height:462px;background:#454545;"></div>
<div class="a" style="left:776px;top:52px;width:7px;height:323px;background:#5a5a5a;"></div>
<div class="a" style="left:783px;top:42px;width:2px;height:470px;background:#3a3a3a;"></div>
<svg class="a" style="left:777.5px;top:45.5px;" width="5" height="3" viewBox="0 0 5 3"><path d="M0.5 2.5L2.5 0.5L4.5 2.5" fill="none" stroke="#888" stroke-width="0.7"/></svg>
<svg class="a" style="left:777.5px;top:497.5px;" width="5" height="3" viewBox="0 0 5 3"><path d="M0.5 0.5L2.5 2.5L4.5 0.5" fill="none" stroke="#aaa" stroke-width="0.8"/></svg>
<div class="a" style="left:20px;top:503px;width:765px;height:9px;background:#474747;"></div>
<div class="a" style="left:43px;top:503.5px;width:88px;height:8px;background:#3e3e3e;"></div>
<div class="t" style="left:24.2px;top:504.57px;font-size:64.1px;line-height:64.1px;color:#e0e0e0;font-weight:normal;transform:scale(0.0780,0.1);">100%</div>
<div class="t" style="left:59.8px;top:504.82px;font-size:59.0px;line-height:59.0px;color:#cfcfcf;font-weight:normal;transform:scale(0.0780,0.1);">600 Px x 600 Px (72 ppi)</div>
<svg class="a" style="left:130px;top:505.5px;" width="3" height="5" viewBox="0 0 3 5"><path d="M0.5 0.5L2.5 2.5L0.5 4.5" fill="none" stroke="#bbb" stroke-width="0.7"/></svg>
<svg class="a" style="left:138.5px;top:505.5px;" width="3" height="5" viewBox="0 0 3 5"><path d="M2.5 0.5L0.5 2.5L2.5 4.5" fill="none" stroke="#888" stroke-width="0.7"/></svg>
<div class="a" style="left:143px;top:504.5px;width:633px;height:7px;background:#474747;"></div>
<div class="a" style="left:317px;top:504.8px;width:276px;height:6.4px;background:#6c6c6c;border-radius:3px"></div>
<svg class="a" style="left:768.5px;top:505.5px;" width="3" height="5" viewBox="0 0 3 5"><path d="M0.5 0.5L2.5 2.5L0.5 4.5" fill="none" stroke="#888" stroke-width="0.7"/></svg>
<div class="a" style="left:0px;top:29px;width:20.5px;height:483px;background:#3a3a3a;"></div>
<div class="a" style="left:1.5px;top:34px;width:17.5px;height:478px;background:#535353;"></div>
<svg class="a" style="left:2.2px;top:30.5px;" width="4" height="3" viewBox="0 0 4 3"><path d="M0.3 0.3L1.3 1.5L0.3 2.7M2.3 0.3L3.3 1.5L2.3 2.7" fill="none" stroke="#c8c8c8" stroke-width="0.7"/></svg>
<div class="a" style="left:4px;top:37px;width:11px;height:0.6px;background:#6a6a6a;"></div>
<svg class="a" style="left:5px;top:44.5px;" width="10" height="10" viewBox="0 0 10 10"><path d="M5 0.5V9.5M0.5 5H9.5" stroke="#d6d6d6" stroke-width="0.9"/><path d="M5 0L6.3 1.6H3.7ZM5 10L6.3 8.4H3.7ZM0 5L1.6 3.7V6.3ZM10 5L8.4 3.7V6.3Z" fill="#d6d6d6"/></svg>
<svg class="a" style="left:14px;top:51.7px" width="2" height="2"><path d="M2 0V2H0Z" fill="#aaa"/></svg>
<svg class="a" style="left:5px;top:57px;" width="10" height="10" viewBox="0 0 10 10"><rect x="1" y="2" width="8" height="6.5" fill="none" stroke="#d6d6d6" stroke-width="0.9" stroke-dasharray="1.6 1"/></svg>
<svg class="a" style="left:14px;top:64.2px" width="2" height="2"><path d="M2 0V2H0Z" fill="#aaa"/></svg>
<svg class="a" style="left:5px;top:69.7px;" width="10" height="10" viewBox="0 0 10 10"><ellipse cx="5" cy="4.3" rx="4" ry="3" fill="none" stroke="#d6d6d6" stroke-width="0.9"/><path d="M2.5 6.5Q2 8.5 3.5 9.5" fill="none" stroke="#d6d6d6" stroke-width="0.8"/></svg>
<svg class="a" style="left:14px;top:76.9px" width="2" height="2"><path d="M2 0V2H0Z" fill="#aaa"/></svg>
<svg class="a" style="left:5px;top:82.5px;" width="10" height="10" viewBox="0 0 10 10"><path d="M2 1.5L7 4.5L4.8 5.2L6.5 8.5L5.3 9L3.7 5.8L2 7.3Z" fill="#d6d6d6"/><rect x="0.6" y="0.6" width="3" height="3" fill="none" stroke="#d6d6d6" stroke-width="0.6" stroke-dasharray="1 0.6"/></svg>
<svg class="a" style="left:14px;top:89.7px" width="2" height="2"><path d="M2 0V2H0Z" fill="#aaa"/></svg>
<svg class="a" style="left:5px;top:94.6px;" width="10" height="10" viewBox="0 0 10 10"><path d="M2.5 0.5V7.5H9.5M0.5 2.5H7.5V9.5" fill="none" stroke="#d6d6d6" stroke-width="1.1"/></svg>
<svg class="a" style="left:14px;top:101.8px" width="2" height="2"><path d="M2 0V2H0Z" fill="#aaa"/></svg>
<svg class="a" style="left:5px;top:108px;" width="10" height="10" viewBox="0 0 10 10"><rect x="1" y="1" width="8" height="8" fill="none" stroke="#d6d6d6" stroke-width="0.9"/><path d="M1 1L9 9M9 1L1 9" stroke="#d6d6d6" stroke-width="0.7"/></svg>
<svg class="a" style="left:14px;top:115.2px" width="2" height="2"><path d="M2 0V2H0Z" fill="#aaa"/></svg>
<svg class="a" style="left:5px;top:120.3px;" width="10" height="10" viewBox="0 0 10 10"><path d="M1.3 8.7L6 4" stroke="#d6d6d6" stroke-width="1.2"/><path d="M5 3L7.5 0.8Q9.2 0.8 9.2 2.5L7 5Z" fill="#d6d6d6"/></svg>
<svg class="a" style="left:14px;top:127.5px" width="2" height="2"><path d="M2 0V2H0Z" fill="#aaa"/></svg>
<svg class="a" style="left:5px;top:133px;" width="10" height="10" viewBox="0 0 10 10"><path d="M1.5 6.5L6.5 1.5Q8.5 1.5 8.5 3.5L3.5 8.5Q1.5 8.5 1.5 6.5Z" fill="#d6d6d6"/><circle cx="5" cy="5" r="0.8" fill="#535353"/></svg>
<svg class="a" style="left:14px;top:140.2px" width="2" height="2"><path d="M2 0V2H0Z" fill="#aaa"/></svg>
<svg class="a" style="left:5px;top:145.8px;" width="10" height="10" viewBox="0 0 10 10"><path d="M1 9Q1.2 7 2.8 6.8L8.5 1L9.2 1.6L3.6 7.4Q3.3 9 1 9Z" fill="#d6d6d6"/></svg>
<svg class="a" style="left:14px;top:153.0px" width="2" height="2"><path d="M2 0V2H0Z" fill="#aaa"/></svg>
<svg class="a" style="left:5px;top:158.5px;" width="10" height="10" viewBox="0 0 10 10"><circle cx="5" cy="2" r="1.4" fill="#d6d6d6"/><path d="M4.2 3.2H5.8V5.5H8.5V7.3H1.5V5.5H4.2Z" fill="#d6d6d6"/><rect x="1.5" y="8.2" width="7" height="1" fill="#d6d6d6"/></svg>
<svg class="a" style="left:14px;top:165.7px" width="2" height="2"><path d="M2 0V2H0Z" fill="#aaa"/></svg>
<svg class="a" style="left:5px;top:171.3px;" width="10" height="10" viewBox="0 0 10 10"><path d="M1 9L8.5 1.5" stroke="#d6d6d6" stroke-width="1.1"/><path d="M1 4Q2 1 5 1" fill="none" stroke="#d6d6d6" stroke-width="0.7"/></svg>
<svg class="a" style="left:14px;top:178.5px" width="2" height="2"><path d="M2 0V2H0Z" fill="#aaa"/></svg>
<svg class="a" style="left:5px;top:184px;" width="10" height="10" viewBox="0 0 10 10"><path d="M1.5 6.5L5.5 2.5L8.5 5.5L4.5 9.5H2.5Z" fill="#d6d6d6"/><rect x="5" y="8.8" width="4" height="0.7" fill="#d6d6d6"/></svg>
<svg class="a" style="left:14px;top:191.2px" width="2" height="2"><path d="M2 0V2H0Z" fill="#aaa"/></svg>
<svg class="a" style="left:5px;top:198.6px;" width="10" height="10" viewBox="0 0 10 10"><path d="M2 4L5 1L9 5L5 9L1 5Z" fill="none" stroke="#d6d6d6" stroke-width="0.9"/><path d="M1.5 5L8.5 5L5 8.5Z" fill="#d6d6d6"/><path d="M9 6Q10 8 9 9Q8 8 9 6" fill="#d6d6d6"/></svg>
<svg class="a" style="left:14px;top:205.8px" width="2" height="2"><path d="M2 0V2H0Z" fill="#aaa"/></svg>
<svg class="a" style="left:5px;top:210.7px;" width="10" height="10" viewBox="0 0 10 10"><path d="M5 0.8Q8.2 5 8.2 6.5A3.2 3.2 0 0 1 1.8 6.5Q1.8 5 5 0.8Z" fill="#d6d6d6"/></svg>
<svg class="a" style="left:14px;top:217.9px" width="2" height="2"><path d="M2 0V2H0Z" fill="#aaa"/></svg>
<svg class="a" style="left:5px;top:223.6px;" width="10" height="10" viewBox="0 0 10 10"><ellipse cx="4.5" cy="5" rx="3.8" ry="2.6" fill="#d6d6d6"/><path d="M7.5 6L9.5 9" stroke="#d6d6d6" stroke-width="1.2"/><circle cx="3.5" cy="4.5" r="1" fill="#535353"/></svg>
<svg class="a" style="left:14px;top:230.8px" width="2" height="2"><path d="M2 0V2H0Z" fill="#aaa"/></svg>
<svg class="a" style="left:5px;top:236.8px;" width="10" height="10" viewBox="0 0 10 10"><path d="M1.5 8.5L2.5 4.5L6 1L9 4L5.5 7.5Z" fill="none" stroke="#d6d6d6" stroke-width="0.9"/><circle cx="4.6" cy="5.4" r="0.8" fill="#d6d6d6"/></svg>
<svg class="a" style="left:14px;top:244.0px" width="2" height="2"><path d="M2 0V2H0Z" fill="#aaa"/></svg>
<svg class="a" style="left:5px;top:250px;" width="10" height="10" viewBox="0 0 10 10"><path d="M1.5 1.5H8.5V3.2H7.6V2.6H5.7V8.3H6.6V9H3.4V8.3H4.3V2.6H2.4V3.2H1.5Z" fill="#d6d6d6"/></svg>
<svg class="a" style="left:14px;top:257.2px" width="2" height="2"><path d="M2 0V2H0Z" fill="#aaa"/></svg>
<svg class="a" style="left:5px;top:262.2px;" width="10" height="10" viewBox="0 0 10 10"><path d="M2.5 1L8 6.2H5.5L7 9L6 9.4L4.6 6.7L2.5 8.5Z" fill="#d6d6d6"/></svg>
<svg class="a" style="left:14px;top:269.4px" width="2" height="2"><path d="M2 0V2H0Z" fill="#aaa"/></svg>
<svg class="a" style="left:5px;top:274.5px;" width="10" height="10" viewBox="0 0 10 10"><rect x="0.8" y="2" width="8.4" height="6" fill="none" stroke="#d6d6d6" stroke-width="1"/><rect x="2" y="3.2" width="6" height="3.6" fill="#888"/></svg>
<svg class="a" style="left:14px;top:281.7px" width="2" height="2"><path d="M2 0V2H0Z" fill="#aaa"/></svg>
<svg class="a" style="left:5px;top:288.5px;" width="10" height="10" viewBox="0 0 10 10"><path d="M2 5V3Q2 2 3 2.2V5M3 4.5V1.5Q3 0.6 4 0.8V4.5M4 4.5V1Q4.2 0.3 5 0.5V4.5M5 4.5V1.5Q5.3 0.8 6 1V5.2L7.3 4Q8.4 3.5 8.6 4.4L6.5 8Q5.8 9.5 4.3 9.5Q2 9.5 2 7Z" fill="#d6d6d6"/></svg>
<svg class="a" style="left:14px;top:295.7px" width="2" height="2"><path d="M2 0V2H0Z" fill="#aaa"/></svg>
<div class="a" style="left:4px;top:299.7px;width:12px;height:11px;background:#3a3a3a;border-radius:1px"></div>
<svg class="a" style="left:5px;top:300.2px;" width="10" height="10" viewBox="0 0 10 10"><circle cx="4" cy="4" r="2.8" fill="none" stroke="#d6d6d6" stroke-width="1"/><path d="M6 6L9 9" stroke="#d6d6d6" stroke-width="1.2"/></svg>
<svg class="a" style="left:14px;top:307.4px" width="2" height="2"><path d="M2 0V2H0Z" fill="#aaa"/></svg>
<svg class="a" style="left:5px;top:316.5px;" width="10" height="3" viewBox="0 0 10 3"><circle cx="1.5" cy="1.3" r="0.8" fill="#d6d6d6"/><circle cx="5" cy="1.3" r="0.8" fill="#d6d6d6"/><circle cx="8.5" cy="1.3" r="0.8" fill="#d6d6d6"/></svg>
<svg class="a" style="left:3px;top:325px;" width="14" height="7" viewBox="0 0 14 7"><rect x="0.5" y="0.5" width="3.5" height="3.5" fill="#111" stroke="#ccc" stroke-width="0.5"/><rect x="2" y="2" width="3.5" height="3.5" fill="#eee"/><path d="M10 1Q12.5 1 12.5 4" fill="none" stroke="#d6d6d6" stroke-width="0.8"/><path d="M9 1L10.5 0V2Z M11.5 3.5L13.5 3.5L12.5 5Z" fill="#d6d6d6"/></svg>
<div class="a" style="left:7px;top:338.5px;width:9px;height:9px;background:#f4f4f4;"></div>
<div class="a" style="left:3px;top:334.5px;width:9px;height:9px;background:#0a0a0a;border:0.6px solid #cfcfcf"></div>
<svg class="a" style="left:4.5px;top:352.5px;" width="11" height="9" viewBox="0 0 11 9"><rect x="0.5" y="0.5" width="10" height="8" fill="none" stroke="#d6d6d6" stroke-width="0.9"/><circle cx="5.5" cy="4.5" r="2" fill="none" stroke="#d6d6d6" stroke-width="0.8"/></svg>
<svg class="a" style="left:4.5px;top:366px;" width="11" height="9" viewBox="0 0 11 9"><rect x="3" y="0.5" width="7.5" height="5.5" fill="none" stroke="#d6d6d6" stroke-width="0.9"/><rect x="0.5" y="3" width="7.5" height="5.5" fill="#535353" stroke="#d6d6d6" stroke-width="0.9"/></svg>
<div class="a" style="left:785px;top:29px;width:20px;height:483px;background:#3a3a3a;"></div>
<svg class="a" style="left:796.8px;top:30.5px;" width="4" height="3" viewBox="0 0 4 3"><path d="M0.3 0.3L1.3 1.5L0.3 2.7M2.3 0.3L3.3 1.5L2.3 2.7" fill="none" stroke="#c8c8c8" stroke-width="0.7"/></svg>
<div class="a" style="left:786px;top:35px;width:17.5px;height:477px;background:#535353;"></div>
<div class="a" style="left:786px;top:35px;width:17.5px;height:19px;background:#4d4d4d;border:0.6px solid #5e5e5e"></div>
<div class="a" style="left:786px;top:55px;width:17.5px;height:34px;background:#4d4d4d;border:0.6px solid #5e5e5e"></div>
<svg class="a" style="left:789px;top:38px;" width="12" height="12" viewBox="0 0 12 12"><rect x="2.5" y="1" width="3" height="9.5" rx="0.8" fill="#d6d6d6"/><rect x="2.5" y="1.5" width="3" height="2" fill="#888"/><rect x="2.5" y="5" width="3" height="2" fill="#999"/><path d="M7 1.5Q10.5 2.5 9.8 5.8Q9.2 8 7.8 8.8" fill="none" stroke="#d6d6d6" stroke-width="1.1"/><path d="M7 0.8L8.5 2.6L6.5 3Z" fill="#d6d6d6"/></svg>
<svg class="a" style="left:789px;top:61px;" width="12" height="11" viewBox="0 0 12 11"><path d="M2 6.5L9.5 1.2L10.3 2L3.5 8.5" fill="#d6d6d6"/><path d="M1.5 10.3Q1.2 7.5 3.3 7L4.2 8Q4.2 10.3 1.5 10.3Z" fill="#d6d6d6"/><path d="M0.8 1.2H3.5M0.8 2.8H3.5" stroke="#d6d6d6" stroke-width="0.6"/></svg>
<svg class="a" style="left:789px;top:74px;" width="12" height="10" viewBox="0 0 12 10"><path d="M1 2H9M1 7H9" stroke="#d6d6d6" stroke-width="0.9"/><circle cx="3.5" cy="2" r="1.5" fill="#d6d6d6"/><circle cx="8.5" cy="7" r="1.8" fill="#d6d6d6"/></svg>
<div class="a" style="left:805px;top:29px;width:140px;height:483px;background:#3a3a3a;"></div>
<svg class="a" style="left:937.5px;top:30.5px;" width="4" height="3" viewBox="0 0 4 3"><path d="M0.3 0.3L1.3 1.5L0.3 2.7M2.3 0.3L3.3 1.5L2.3 2.7" fill="none" stroke="#c8c8c8" stroke-width="0.7"/></svg>
<div class="a" style="left:805px;top:34.6px;width:140px;height:13.699999999999996px;background:#424242;"></div>
<div class="a" style="left:826.0px;top:35.6px;width:0.6px;height:12.699999999999996px;background:#3a3a3a;"></div>
<div class="t" style="left:809.1px;top:38.47px;font-size:56.8px;line-height:56.8px;color:#b4b4b4;font-weight:normal;transform:scale(0.0880,0.1);">Farbe</div>
<div class="a" style="left:826.5px;top:34.6px;width:31.299999999999955px;height:14.199999999999996px;background:#535353;"></div>
<div class="t" style="left:830.5px;top:38.53px;font-size:55.7px;line-height:55.7px;color:#f2f2f2;font-weight:bold;transform:scale(0.0880,0.1);">Farbfelder</div>
<div class="a" style="left:885.3px;top:35.6px;width:0.6px;height:12.699999999999996px;background:#3a3a3a;"></div>
<div class="t" style="left:861.5px;top:38.47px;font-size:56.8px;line-height:56.8px;color:#b4b4b4;font-weight:normal;transform:scale(0.0880,0.1);">Verläufe</div>
<div class="a" style="left:910.0px;top:35.6px;width:0.6px;height:12.699999999999996px;background:#3a3a3a;"></div>
<div class="t" style="left:889.8px;top:38.47px;font-size:56.8px;line-height:56.8px;color:#b4b4b4;font-weight:normal;transform:scale(0.0880,0.1);">Muster</div>
<svg class="a" style="left:936.5px;top:38.95px;" width="6" height="5" viewBox="0 0 6 5"><path d="M0 0.6H6M0 2.5H6M0 4.4H6" stroke="#a8a8a8" stroke-width="0.8"/></svg>
<div class="a" style="left:805px;top:48.3px;width:140px;height:131px;background:#535353;"></div>
<div class="a" style="left:816.2px;top:54.4px;width:123.8px;height:9.2px;background:#474747;border-radius:1px"></div>
<svg class="a" style="left:808px;top:56px;" width="7" height="6" viewBox="0 0 7 6"><circle cx="2.6" cy="2.5" r="1.9" fill="none" stroke="#cfcfcf" stroke-width="0.9"/><path d="M4 4L6 5.8" stroke="#cfcfcf" stroke-width="1"/></svg>
<div class="t" style="left:818.6px;top:54.87px;font-size:74.4px;line-height:74.4px;color:#858585;font-weight:normal;transform:scale(0.0780,0.1);font-style:italic">Farbfelder suchen</div>
<div class="a" style="left:808.6px;top:68.6px;width:7.7px;height:8.1px;background:#ffffff;"></div>
<div class="a" style="left:817.44px;top:68.6px;width:7.7px;height:8.1px;background:#000000;"></div>
<div class="a" style="left:826.28px;top:68.6px;width:7.7px;height:8.1px;background:#000000;"></div>
<div class="a" style="left:835.12px;top:68.6px;width:7.7px;height:8.1px;background:#050505;"></div>
<div class="a" style="left:843.96px;top:68.6px;width:7.7px;height:8.1px;background:#e9eadb;"></div>
<div class="a" style="left:852.8000000000001px;top:68.6px;width:7.7px;height:8.1px;background:#ffffff;"></div>
<div class="a" style="left:861.64px;top:68.6px;width:7.7px;height:8.1px;background:#ffffff;"></div>
<div class="a" style="left:870.48px;top:68.6px;width:7.7px;height:8.1px;background:#ffffff;"></div>
<div class="a" style="left:879.32px;top:68.6px;width:7.7px;height:8.1px;background:#e6e8d8;"></div>
<div class="a" style="left:888.1600000000001px;top:68.6px;width:7.7px;height:8.1px;background:#000000;"></div>
<div class="a" style="left:897.0px;top:68.6px;width:7.7px;height:8.1px;background:#ffffff;"></div>
<div class="a" style="left:905.84px;top:68.6px;width:7.7px;height:8.1px;background:#2b2245;"></div>
<div class="a" style="left:914.6800000000001px;top:68.6px;width:7.7px;height:8.1px;background:#f6f6f2;"></div>
<div class="a" style="left:923.52px;top:68.6px;width:7.7px;height:8.1px;background:#f8f8f8;"></div>
<div class="a" style="left:932.36px;top:68.6px;width:7.7px;height:8.1px;background:#efefef;"></div>
<div class="a" style="left:805px;top:80.2px;width:140px;height:0.8px;background:#474747;"></div>
<div class="a" style="left:806px;top:81px;width:134px;height:98.2px;background:#4e4e4e;"></div>
<div class="a" style="left:936.6px;top:81px;width:3.6px;height:98px;background:#4a4a4a;"></div>
<div class="a" style="left:937.2px;top:82.6px;width:2.6px;height:69.2px;background:#6a6a6a;border-radius:1px"></div>
<svg class="a" style="left:937px;top:173px;" width="3.5" height="2.5" viewBox="0 0 3.5 2.5"><path d="M0.3 0.4L1.75 2L3.2 0.4" fill="none" stroke="#8a8a8a" stroke-width="0.6"/></svg>
<svg class="a" style="left:808.8px;top:86.7px;" width="3" height="5" viewBox="0 0 3 5"><path d="M0.4 0.4L2.3 2.5L0.4 4.6" fill="none" stroke="#b0b0b0" stroke-width="0.6"/></svg>
<svg class="a" style="left:814.6px;top:86.4px;" width="7.5" height="5.6" viewBox="0 0 7.5 5.6"><path d="M0 0.5Q0 0 0.5 0H2.8L3.6 0.8H7Q7.5 0.8 7.5 1.3V5.1Q7.5 5.6 7 5.6H0.5Q0 5.6 0 5.1Z" fill="#e0e0e0"/><path d="M0 1.7H7.5" stroke="#535353" stroke-width="0.4"/></svg>
<div class="t" style="left:826.6px;top:85.54px;font-size:66.7px;line-height:66.7px;color:#d6d6d6;font-weight:normal;transform:scale(0.0780,0.1);">RGB</div>
<svg class="a" style="left:808.8px;top:100.9px;" width="3" height="5" viewBox="0 0 3 5"><path d="M0.4 0.4L2.3 2.5L0.4 4.6" fill="none" stroke="#b0b0b0" stroke-width="0.6"/></svg>
<svg class="a" style="left:814.6px;top:100.60000000000001px;" width="7.5" height="5.6" viewBox="0 0 7.5 5.6"><path d="M0 0.5Q0 0 0.5 0H2.8L3.6 0.8H7Q7.5 0.8 7.5 1.3V5.1Q7.5 5.6 7 5.6H0.5Q0 5.6 0 5.1Z" fill="#e0e0e0"/><path d="M0 1.7H7.5" stroke="#535353" stroke-width="0.4"/></svg>
<div class="t" style="left:826.6px;top:99.74px;font-size:66.7px;line-height:66.7px;color:#d6d6d6;font-weight:normal;transform:scale(0.0780,0.1);">CMYK</div>
<svg class="a" style="left:808.8px;top:115.1px;" width="3" height="5" viewBox="0 0 3 5"><path d="M0.4 0.4L2.3 2.5L0.4 4.6" fill="none" stroke="#b0b0b0" stroke-width="0.6"/></svg>
<svg class="a" style="left:814.6px;top:114.8px;" width="7.5" height="5.6" viewBox="0 0 7.5 5.6"><path d="M0 0.5Q0 0 0.5 0H2.8L3.6 0.8H7Q7.5 0.8 7.5 1.3V5.1Q7.5 5.6 7 5.6H0.5Q0 5.6 0 5.1Z" fill="#e0e0e0"/><path d="M0 1.7H7.5" stroke="#535353" stroke-width="0.4"/></svg>
<div class="t" style="left:826.6px;top:113.94px;font-size:66.7px;line-height:66.7px;color:#d6d6d6;font-weight:normal;transform:scale(0.0780,0.1);">Graustufen</div>
<svg class="a" style="left:808.8px;top:129.3px;" width="3" height="5" viewBox="0 0 3 5"><path d="M0.4 0.4L2.3 2.5L0.4 4.6" fill="none" stroke="#b0b0b0" stroke-width="0.6"/></svg>
<svg class="a" style="left:814.6px;top:129.0px;" width="7.5" height="5.6" viewBox="0 0 7.5 5.6"><path d="M0 0.5Q0 0 0.5 0H2.8L3.6 0.8H7Q7.5 0.8 7.5 1.3V5.1Q7.5 5.6 7 5.6H0.5Q0 5.6 0 5.1Z" fill="#e0e0e0"/><path d="M0 1.7H7.5" stroke="#535353" stroke-width="0.4"/></svg>
<div class="t" style="left:826.6px;top:128.14px;font-size:66.7px;line-height:66.7px;color:#d6d6d6;font-weight:normal;transform:scale(0.0780,0.1);">Pastell</div>
<svg class="a" style="left:808.8px;top:143.5px;" width="3" height="5" viewBox="0 0 3 5"><path d="M0.4 0.4L2.3 2.5L0.4 4.6" fill="none" stroke="#b0b0b0" stroke-width="0.6"/></svg>
<svg class="a" style="left:814.6px;top:143.2px;" width="7.5" height="5.6" viewBox="0 0 7.5 5.6"><path d="M0 0.5Q0 0 0.5 0H2.8L3.6 0.8H7Q7.5 0.8 7.5 1.3V5.1Q7.5 5.6 7 5.6H0.5Q0 5.6 0 5.1Z" fill="#e0e0e0"/><path d="M0 1.7H7.5" stroke="#535353" stroke-width="0.4"/></svg>
<div class="t" style="left:826.6px;top:142.34px;font-size:66.7px;line-height:66.7px;color:#d6d6d6;font-weight:normal;transform:scale(0.0780,0.1);">Hell</div>
<svg class="a" style="left:808.8px;top:157.7px;" width="3" height="5" viewBox="0 0 3 5"><path d="M0.4 0.4L2.3 2.5L0.4 4.6" fill="none" stroke="#b0b0b0" stroke-width="0.6"/></svg>
<svg class="a" style="left:814.6px;top:157.39999999999998px;" width="7.5" height="5.6" viewBox="0 0 7.5 5.6"><path d="M0 0.5Q0 0 0.5 0H2.8L3.6 0.8H7Q7.5 0.8 7.5 1.3V5.1Q7.5 5.6 7 5.6H0.5Q0 5.6 0 5.1Z" fill="#e0e0e0"/><path d="M0 1.7H7.5" stroke="#535353" stroke-width="0.4"/></svg>
<div class="t" style="left:826.6px;top:156.54px;font-size:66.7px;line-height:66.7px;color:#d6d6d6;font-weight:normal;transform:scale(0.0780,0.1);">Rain</div>
<svg class="a" style="left:808.8px;top:171.89999999999998px;" width="3" height="5" viewBox="0 0 3 5"><path d="M0.4 0.4L2.3 2.5L0.4 4.6" fill="none" stroke="#b0b0b0" stroke-width="0.6"/></svg>
<svg class="a" style="left:814.6px;top:171.59999999999997px;" width="7.5" height="5.6" viewBox="0 0 7.5 5.6"><path d="M0 0.5Q0 0 0.5 0H2.8L3.6 0.8H7Q7.5 0.8 7.5 1.3V5.1Q7.5 5.6 7 5.6H0.5Q0 5.6 0 5.1Z" fill="#e0e0e0"/><path d="M0 1.7H7.5" stroke="#535353" stroke-width="0.4"/></svg>
<div class="t" style="left:826.6px;top:170.74px;font-size:66.7px;line-height:66.7px;color:#d6d6d6;font-weight:normal;transform:scale(0.0780,0.1);">Dunkel</div>
<div class="a" style="left:805px;top:179.2px;width:140px;height:13.2px;background:#535353;"></div>
<div class="a" style="left:805px;top:179.2px;width:140px;height:0.6px;background:#484848;"></div>
<svg class="a" style="left:896px;top:183.5px;" width="7.5" height="5.6" viewBox="0 0 7.5 5.6"><path d="M0 0.5Q0 0 0.5 0H2.8L3.6 0.8H7Q7.5 0.8 7.5 1.3V5.1Q7.5 5.6 7 5.6H0.5Q0 5.6 0 5.1Z" fill="#e0e0e0"/><path d="M0 1.7H7.5" stroke="#535353" stroke-width="0.4"/></svg>
<svg class="a" style="left:911px;top:183px;" width="7" height="7" viewBox="0 0 7 7"><rect x="0.5" y="0.5" width="6" height="6" rx="0.6" fill="none" stroke="#d0d0d0" stroke-width="0.8"/><path d="M3.5 1.8V5.2M1.8 3.5H5.2" stroke="#d0d0d0" stroke-width="0.8"/></svg>
<svg class="a" style="left:924.5px;top:182.8px;" width="6" height="7.5" viewBox="0 0 6 7.5"><path d="M0 1.2H6M2 1.2V0.3H4V1.2M0.8 1.8H5.2L4.8 7.3H1.2Z" fill="none" stroke="#7e7e7e" stroke-width="0.7"/></svg>
<div class="a" style="left:805px;top:194.2px;width:140px;height:13.5px;background:#424242;"></div>
<div class="a" style="left:845.5px;top:195.2px;width:0.6px;height:12.5px;background:#3a3a3a;"></div>
<div class="t" style="left:808.9px;top:197.97px;font-size:56.8px;line-height:56.8px;color:#b4b4b4;font-weight:normal;transform:scale(0.0880,0.1);">Eigenschaften</div>
<div class="a" style="left:882.4px;top:195.2px;width:0.6px;height:12.5px;background:#3a3a3a;"></div>
<div class="t" style="left:849.9px;top:197.97px;font-size:56.8px;line-height:56.8px;color:#b4b4b4;font-weight:normal;transform:scale(0.0880,0.1);">Korrekturen</div>
<div class="a" style="left:882.9px;top:194.2px;width:37.60000000000002px;height:14.0px;background:#535353;"></div>
<div class="t" style="left:887.5px;top:198.03px;font-size:55.7px;line-height:55.7px;color:#f2f2f2;font-weight:bold;transform:scale(0.0880,0.1);">Bibliotheken</div>
<svg class="a" style="left:936.5px;top:198.45px;" width="6" height="5" viewBox="0 0 6 5"><path d="M0 0.6H6M0 2.5H6M0 4.4H6" stroke="#a8a8a8" stroke-width="0.8"/></svg>
<div class="a" style="left:805px;top:207.7px;width:140px;height:133px;background:#535353;"></div>
<svg class="a" style="left:809.5px;top:215.5px;" width="3" height="5" viewBox="0 0 3 5"><path d="M2.5 0.4L0.5 2.5L2.5 4.6" fill="none" stroke="#d0d0d0" stroke-width="0.8"/></svg>
<div class="t" style="left:816.1px;top:214.97px;font-size:53.8px;line-height:53.8px;color:#dadada;font-weight:bold;transform:scale(0.0780,0.1);letter-spacing:3.6px">MEINE BIBLIOTHEK</div>
<svg class="a" style="left:928.5px;top:214.3px;" width="8" height="8" viewBox="0 0 8 8"><circle cx="3.8" cy="3.8" r="3.2" fill="none" stroke="#d8d8d8" stroke-width="1"/><circle cx="3.8" cy="3.2" r="1.2" fill="#d8d8d8"/><path d="M1.6 6.2Q3.8 3.8 6 6.2" fill="#d8d8d8"/><circle cx="6.6" cy="6.6" r="1" fill="#d8d8d8"/></svg>
<svg class="a" style="left:811px;top:233px;" width="6" height="6" viewBox="0 0 6 6"><circle cx="2.4" cy="2.4" r="1.8" fill="none" stroke="#c0c0c0" stroke-width="0.8"/><path d="M3.7 3.7L5.6 5.6" stroke="#c0c0c0" stroke-width="0.9"/></svg>
<div class="t" style="left:820.7px;top:232.04px;font-size:66.7px;line-height:66.7px;color:#757575;font-weight:normal;transform:scale(0.0780,0.1);">Alle Bibliotheken durchsuchen</div>
<svg class="a" style="left:930.8px;top:234.5px;" width="4" height="3" viewBox="0 0 4 3"><path d="M0.4 0.4L2 2.2L3.6 0.4" fill="none" stroke="#d0d0d0" stroke-width="0.8"/></svg>
<div class="a" style="left:810px;top:242.7px;width:130px;height:0.7px;background:#4a4a4a;"></div>
<svg class="a" style="left:813.5px;top:250px;" width="6.5" height="6.5" viewBox="0 0 6.5 6.5"><path d="M0 0.3H6.5L4 3.3V6.3L2.5 5.5V3.3Z" fill="#dcdcdc"/></svg>
<svg class="a" style="left:826.8px;top:250px;" width="6.5" height="7" viewBox="0 0 6.5 7"><path d="M0 0.7H3.8M0 3.2H3M0 5.8H2.2" stroke="#d8d8d8" stroke-width="0.8"/><path d="M5.3 0.4V6.4M4.2 5L5.3 6.4L6.4 5" fill="none" stroke="#d8d8d8" stroke-width="0.7"/></svg>
<svg class="a" style="left:915.5px;top:250px;" width="7.5" height="6.5" viewBox="0 0 7.5 6.5"><path d="M2.6 0.5L1.6 5.8H7" fill="none" stroke="#cfcfcf" stroke-width="0.7"/><circle cx="4.5" cy="5.8" r="0.4" fill="#cfcfcf"/><circle cx="6" cy="5.8" r="0.4" fill="#cfcfcf"/></svg>
<svg class="a" style="left:928.5px;top:250px;" width="7" height="7" viewBox="0 0 7 7"><rect x="0" y="0.2" width="1.6" height="1.6" fill="#d8d8d8"/><rect x="0" y="2.7" width="1.6" height="1.6" fill="#d8d8d8"/><rect x="0" y="5.2" width="1.6" height="1.6" fill="#d8d8d8"/><path d="M2.4 1H7M2.4 3.5H7M2.4 6H7" stroke="#d8d8d8" stroke-width="0.9"/></svg>
<div class="a" style="left:808px;top:262.2px;width:132px;height:0.6px;background:#505050;"></div>
<div class="a" style="left:810.7px;top:269.7px;width:38.9px;height:37.7px;border:0.8px solid #7b93b8;background:radial-gradient(ellipse at 50% 45%,#a9a9a9 0%,#c3c3c3 55%,#cdcdcd 100%)"></div>
<div class="a" style="left:820px;top:279.2px;width:19.5px;height:19.2px;background:#5b5b5b;box-shadow:0 0 3px 1px rgba(0,0,0,0.25)"></div>
<div class="a" style="left:811.5px;top:300.7px;width:37.3px;height:6.2px;background:#4c4c4c;border-bottom:0.8px solid #6f8db8"></div>
<div class="t" style="left:812.7px;top:300.17px;font-size:64.1px;line-height:64.1px;color:#f0f0f0;font-weight:normal;transform:scale(0.0780,0.1);">Stil 1</div>
<div class="a" style="left:805px;top:340.6px;width:140px;height:11px;background:#4f4f4f;"></div>
<svg class="a" style="left:812.5px;top:343.5px;" width="8.5" height="5.5" viewBox="0 0 8.5 5.5"><path d="M1.5 5.3Q0 5.3 0 4Q0 2.7 1.6 2.7Q2 0.3 4.3 0.3Q6.6 0.3 6.9 2.8Q8.5 2.9 8.5 4.1Q8.5 5.3 7.2 5.3Z" fill="#e8e8e8"/></svg>
<svg class="a" style="left:905.3px;top:343.5px;" width="7.5" height="5.6" viewBox="0 0 7.5 5.6"><path d="M0 0.5Q0 0 0.5 0H2.8L3.6 0.8H7Q7.5 0.8 7.5 1.3V5.1Q7.5 5.6 7 5.6H0.5Q0 5.6 0 5.1Z" fill="#e0e0e0"/><path d="M0 1.7H7.5" stroke="#535353" stroke-width="0.4"/></svg>
<svg class="a" style="left:916.5px;top:343px;" width="7" height="7" viewBox="0 0 7 7"><path d="M3.5 0.3V6.7M0.3 3.5H6.7" stroke="#e0e0e0" stroke-width="1"/><circle cx="6.5" cy="6.3" r="0.5" fill="#e0e0e0"/></svg>
<svg class="a" style="left:928.5px;top:342.8px;" width="6" height="7.5" viewBox="0 0 6 7.5"><path d="M0 1.2H6M2 1.2V0.3H4V1.2M0.8 1.8H5.2L4.8 7.3H1.2Z" fill="none" stroke="#cfcfcf" stroke-width="0.7"/></svg>
<div class="a" style="left:805px;top:351.6px;width:140px;height:1.5px;background:#3a3a3a;"></div>
<div class="a" style="left:805px;top:353.1px;width:140px;height:13.799999999999955px;background:#424242;"></div>
<div class="a" style="left:806px;top:353.1px;width:24px;height:14.299999999999955px;background:#535353;"></div>
<div class="t" style="left:808.9px;top:357.08px;font-size:55.7px;line-height:55.7px;color:#f2f2f2;font-weight:bold;transform:scale(0.0880,0.1);">Ebenen</div>
<div class="a" style="left:853.3px;top:354.1px;width:0.6px;height:12.799999999999955px;background:#3a3a3a;"></div>
<div class="t" style="left:834.5px;top:357.02px;font-size:56.8px;line-height:56.8px;color:#b4b4b4;font-weight:normal;transform:scale(0.0880,0.1);">Kanäle</div>
<div class="a" style="left:876.2px;top:354.1px;width:0.6px;height:12.799999999999955px;background:#3a3a3a;"></div>
<div class="t" style="left:858.8px;top:357.02px;font-size:56.8px;line-height:56.8px;color:#b4b4b4;font-weight:normal;transform:scale(0.0880,0.1);">Pfade</div>
<svg class="a" style="left:936.5px;top:357.5px;" width="6" height="5" viewBox="0 0 6 5"><path d="M0 0.6H6M0 2.5H6M0 4.4H6" stroke="#a8a8a8" stroke-width="0.8"/></svg>
<div class="a" style="left:805px;top:366.9px;width:140px;height:132.6px;background:#535353;"></div>
<div class="a" style="left:807.7px;top:371.5px;width:41.7px;height:9.6px;background:#454545;border-radius:1px"></div>
<svg class="a" style="left:810px;top:373.5px;" width="6.5" height="6" viewBox="0 0 6.5 6"><circle cx="2.4" cy="2.4" r="1.8" fill="none" stroke="#d0d0d0" stroke-width="0.8"/><path d="M3.7 3.7L5.6 5.6" stroke="#d0d0d0" stroke-width="0.9"/></svg>
<div class="t" style="left:817.5px;top:372.83px;font-size:62.8px;line-height:62.8px;color:#d8d8d8;font-weight:normal;transform:scale(0.0780,0.1);">Art</div>
<svg class="a" style="left:844.5px;top:375.3px;" width="4" height="3" viewBox="0 0 4 3"><path d="M0.4 0.4L2 2.2L3.6 0.4" fill="none" stroke="#aaa" stroke-width="0.7"/></svg>
<svg class="a" style="left:862.8px;top:372.8px;" width="7" height="6.5" viewBox="0 0 7 6.5"><rect x="0.4" y="0.4" width="6.2" height="5.4" fill="none" stroke="#d6d6d6" stroke-width="0.8"/><path d="M0.8 5.4L2.8 3.2L4.2 4.4L5 3.6L6.2 5.4Z" fill="#d6d6d6"/></svg>
<svg class="a" style="left:874.8px;top:372.8px;" width="7" height="7" viewBox="0 0 7 7"><circle cx="3.3" cy="3.3" r="2.8" fill="none" stroke="#d6d6d6" stroke-width="0.8"/><path d="M5.3 1.3A2.8 2.8 0 0 1 1.3 5.3Z" fill="#d6d6d6"/></svg>
<svg class="a" style="left:886.8px;top:372.8px;" width="7" height="7" viewBox="0 0 7 7"><path d="M0.4 0.4H6.2V1.8H5.6V1.2H3.9V5.8H4.6V6.4H2V5.8H2.7V1.2H1V1.8H0.4Z" fill="#d6d6d6"/></svg>
<svg class="a" style="left:898.5px;top:372.8px;" width="7" height="7" viewBox="0 0 7 7"><rect x="1" y="1" width="4.8" height="4.8" fill="none" stroke="#d6d6d6" stroke-width="0.6"/><rect x="0" y="0" width="2" height="2" fill="#d6d6d6"/><rect x="4.8" y="0" width="2" height="2" fill="#d6d6d6"/><rect x="0" y="4.8" width="2" height="2" fill="#d6d6d6"/><rect x="4.8" y="4.8" width="2" height="2" fill="#d6d6d6"/></svg>
<svg class="a" style="left:910.5px;top:372.5px;" width="7" height="7.5" viewBox="0 0 7 7.5"><path d="M1 0.4H4.5L6.4 2.3V7H1Z" fill="none" stroke="#d6d6d6" stroke-width="0.8"/><rect x="0.8" y="3.8" width="3.5" height="3.2" fill="#d6d6d6"/></svg>
<svg class="a" style="left:929.8px;top:371px;" width="5" height="9.5" viewBox="0 0 5 9.5"><rect x="0.8" y="4" width="3.4" height="5" rx="1.7" fill="#2e2e2e"/><circle cx="2.5" cy="2.4" r="2.1" fill="#e8e8e8"/></svg>
<div class="a" style="left:807.7px;top:385.3px;width:71.3px;height:9.2px;background:#454545;border-radius:1px"></div>
<div class="t" style="left:810.5px;top:387.23px;font-size:62.8px;line-height:62.8px;color:#d8d8d8;font-weight:normal;transform:scale(0.0780,0.1);">Normal</div>
<svg class="a" style="left:874px;top:388.8px;" width="4" height="3" viewBox="0 0 4 3"><path d="M0.4 0.4L2 2.2L3.6 0.4" fill="none" stroke="#aaa" stroke-width="0.7"/></svg>
<div class="t" style="left:882.9px;top:387.23px;font-size:62.8px;line-height:62.8px;color:#c8c8c8;font-weight:normal;transform:scale(0.0780,0.1);">Deckkraft:</div>
<div class="a" style="left:908.2px;top:385.3px;width:17.6px;height:9.2px;background:#454545;border-radius:1px"></div>
<div class="t" style="left:909.8px;top:387.23px;font-size:62.8px;line-height:62.8px;color:#d8d8d8;font-weight:normal;transform:scale(0.0780,0.1);">100%</div>
<div class="a" style="left:927.4px;top:385.3px;width:5.8px;height:9.2px;background:#454545;border-radius:1px"></div>
<svg class="a" style="left:928.3px;top:388.8px;" width="4" height="3" viewBox="0 0 4 3"><path d="M0.4 0.4L2 2.2L3.6 0.4" fill="none" stroke="#aaa" stroke-width="0.7"/></svg>
<div class="t" style="left:807.7px;top:401.06px;font-size:60.3px;line-height:60.3px;color:#c8c8c8;font-weight:normal;transform:scale(0.0780,0.1);">Fixieren:</div>
<svg class="a" style="left:831px;top:400.8px;" width="6" height="6" viewBox="0 0 6 6"><rect x="0.3" y="0.3" width="5.4" height="5.4" fill="none" stroke="#d6d6d6" stroke-width="0.6"/><rect x="1" y="1" width="2" height="2" fill="#d6d6d6"/><rect x="3" y="3" width="2" height="2" fill="#d6d6d6"/></svg>
<svg class="a" style="left:841.5px;top:400.5px;" width="7" height="7" viewBox="0 0 7 7"><path d="M0.6 6.6Q0.6 5 1.8 4.8L5.8 0.5L6.5 1.2L2.4 5.4Q2.4 6.6 0.6 6.6Z" fill="#d6d6d6"/></svg>
<svg class="a" style="left:852px;top:400.5px;" width="7" height="7" viewBox="0 0 7 7"><path d="M3.5 0V7M0 3.5H7" stroke="#d6d6d6" stroke-width="0.7"/><path d="M3.5 0L4.5 1.2H2.5ZM3.5 7L4.5 5.8H2.5Z" fill="#d6d6d6"/></svg>
<svg class="a" style="left:863px;top:400.5px;" width="7" height="7" viewBox="0 0 7 7"><rect x="1" y="1.3" width="5" height="4.4" fill="none" stroke="#d6d6d6" stroke-width="0.7"/><path d="M0 1.3H1M6 5.7H7M1 0V1.3M6 5.7V7" stroke="#d6d6d6" stroke-width="0.7"/></svg>
<svg class="a" style="left:873.8px;top:400.2px;" width="6" height="7.5" viewBox="0 0 6 7.5"><path d="M1.4 3.2V2Q1.4 0.4 3 0.4Q4.6 0.4 4.6 2V3.2" fill="none" stroke="#d6d6d6" stroke-width="0.8"/><rect x="0.5" y="3.2" width="5" height="4" rx="0.5" fill="#d6d6d6"/></svg>
<div class="t" style="left:889.8px;top:400.93px;font-size:62.8px;line-height:62.8px;color:#c8c8c8;font-weight:normal;transform:scale(0.0780,0.1);">Fläche:</div>
<div class="a" style="left:908.2px;top:399.1px;width:17.6px;height:9.2px;background:#454545;border-radius:1px"></div>
<div class="t" style="left:909.8px;top:400.93px;font-size:62.8px;line-height:62.8px;color:#d8d8d8;font-weight:normal;transform:scale(0.0780,0.1);">100%</div>
<div class="a" style="left:927.4px;top:399.1px;width:5.8px;height:9.2px;background:#454545;border-radius:1px"></div>
<svg class="a" style="left:928.3px;top:402.6px;" width="4" height="3" viewBox="0 0 4 3"><path d="M0.4 0.4L2 2.2L3.6 0.4" fill="none" stroke="#aaa" stroke-width="0.7"/></svg>
<div class="a" style="left:806px;top:410px;width:134px;height:78px;background:#535353;"></div>
<div class="a" style="left:819.2px;top:410px;width:0.6px;height:78px;background:#4a4a4a;"></div>
<div class="a" style="left:932px;top:410px;width:4.6px;height:78px;background:#4e4e4e;"></div>
<div class="a" style="left:932.5px;top:412px;width:3.6px;height:19px;background:#666666;border-radius:1px"></div>
<svg class="a" style="left:808.9px;top:419.59999999999997px;" width="6.8" height="4.6" viewBox="0 0 6.8 4.6"><path d="M0.3 2.3Q3.4 -0.9 6.5 2.3Q3.4 5.5 0.3 2.3Z" fill="none" stroke="#e2e2e2" stroke-width="0.9"/><circle cx="3.4" cy="2.3" r="1.2" fill="#e2e2e2"/></svg>
<div class="a" style="left:822px;top:414.2px;width:14.8px;height:15px;background:#f4f2ee"></div>
<svg class="a" style="left:822px;top:414.2px;" width="14.8" height="15" viewBox="0 0 14.8 15"><ellipse cx="7.5" cy="8.8" rx="6.3" ry="3" fill="#b5b08a"/><ellipse cx="4.5" cy="7.6" rx="2.8" ry="2.6" fill="#e07a22"/><ellipse cx="8.2" cy="6.8" rx="3" ry="2.3" fill="#e8c418"/><ellipse cx="11.2" cy="8.6" rx="1.9" ry="1.6" fill="#2c1c6a"/><ellipse cx="7.6" cy="9.4" rx="2" ry="1.4" fill="#d84020"/><ellipse cx="11" cy="6.4" rx="2" ry="1" fill="#e8e020"/></svg>
<svg class="a" style="left:839.3px;top:417.5px;" width="3" height="8" viewBox="0 0 3 8"><rect x="0.4" y="0.4" width="2.2" height="3.2" rx="1.1" fill="none" stroke="#cfcfcf" stroke-width="0.6"/><rect x="0.4" y="4.4" width="2.2" height="3.2" rx="1.1" fill="none" stroke="#cfcfcf" stroke-width="0.6"/></svg>
<div class="a" style="left:845px;top:414.2px;width:14.8px;height:15px;background:#ffffff"></div>
<div class="a" style="left:845px;top:419.8px;width:5.2px;height:9.4px;background:#535353;"></div>
<div class="a" style="left:852.3px;top:422.2px;width:7.5px;height:7px;background:#f4f4f4;border:0.8px solid #222"></div>
<div class="a" style="left:854.8px;top:424.5px;width:2.5px;height:2.5px;background:#222;"></div>
<div class="t" style="left:864.4px;top:418.95px;font-size:56.2px;line-height:56.2px;color:#d8d8d8;font-weight:normal;transform:scale(0.0880,0.1);">Ebene 0</div>
<div class="t" style="left:925.3px;top:417.80px;font-size:77.8px;line-height:77.8px;color:#d0d0d0;font-weight:bold;transform:scale(0.0900,0.1);font-family:"Liberation Serif",serif"><i>fx</i></div>
<svg class="a" style="left:932.5999999999999px;top:420.1px;" width="4" height="2.5" viewBox="0 0 4 2.5"><path d="M0.3 2.2L2 0.5L3.7 2.2" fill="none" stroke="#a8a8a8" stroke-width="0.6"/></svg>
<svg class="a" style="left:828.8000000000001px;top:434.2px;" width="6.8" height="4.6" viewBox="0 0 6.8 4.6"><path d="M0.3 2.3Q3.4 -0.9 6.5 2.3Q3.4 5.5 0.3 2.3Z" fill="none" stroke="#e2e2e2" stroke-width="0.9"/><circle cx="3.4" cy="2.3" r="1.2" fill="#e2e2e2"/></svg>
<div class="t" style="left:838.4px;top:433.29px;font-size:61.5px;line-height:61.5px;color:#d0d0d0;font-weight:normal;transform:scale(0.0780,0.1);">Effekte</div>
<svg class="a" style="left:837.3000000000001px;top:442.9px;" width="6.8" height="4.6" viewBox="0 0 6.8 4.6"><path d="M0.3 2.3Q3.4 -0.9 6.5 2.3Q3.4 5.5 0.3 2.3Z" fill="none" stroke="#e2e2e2" stroke-width="0.9"/><circle cx="3.4" cy="2.3" r="1.2" fill="#e2e2e2"/></svg>
<div class="t" style="left:846.5px;top:442.26px;font-size:62.2px;line-height:62.2px;color:#d0d0d0;font-weight:normal;transform:scale(0.0780,0.1);">Schlagschatten</div>
<div class="a" style="left:806px;top:449.3px;width:127px;height:0.8px;background:#484848;"></div>
<div class="a" style="left:819.2px;top:450.3px;width:112.8px;height:19.1px;background:#696969;"></div>
<svg class="a" style="left:808.9px;top:458.2px;" width="6.8" height="4.6" viewBox="0 0 6.8 4.6"><path d="M0.3 2.3Q3.4 -0.9 6.5 2.3Q3.4 5.5 0.3 2.3Z" fill="none" stroke="#e2e2e2" stroke-width="0.9"/><circle cx="3.4" cy="2.3" r="1.2" fill="#e2e2e2"/></svg>
<div class="a" style="left:820.4px;top:451.3px;width:18px;height:17.4px;border:0.8px solid #f0f0f0;background:#fff;overflow:hidden"><svg width="18" height="18" style="position:absolute;left:0;top:0"><rect x="4.35" y="0.00" width="4.35" height="4.35" fill="#cdcdcd"/><rect x="13.05" y="0.00" width="4.35" height="4.35" fill="#cdcdcd"/><rect x="0.00" y="4.35" width="4.35" height="4.35" fill="#cdcdcd"/><rect x="8.70" y="4.35" width="4.35" height="4.35" fill="#cdcdcd"/><rect x="4.35" y="8.70" width="4.35" height="4.35" fill="#cdcdcd"/><rect x="13.05" y="8.70" width="4.35" height="4.35" fill="#cdcdcd"/><rect x="0.00" y="13.05" width="4.35" height="4.35" fill="#cdcdcd"/><rect x="8.70" y="13.05" width="4.35" height="4.35" fill="#cdcdcd"/></svg></div>
<div class="t" style="left:841.4px;top:457.55px;font-size:56.2px;line-height:56.2px;color:#e2e2e2;font-weight:normal;transform:scale(0.0880,0.1);">Ebene 1</div>
<div class="t" style="left:925.3px;top:456.40px;font-size:77.8px;line-height:77.8px;color:#d0d0d0;font-weight:bold;transform:scale(0.0900,0.1);font-family:"Liberation Serif",serif"><i>fx</i></div>
<svg class="a" style="left:932.5999999999999px;top:458.7px;" width="4" height="2.5" viewBox="0 0 4 2.5"><path d="M0.3 2.2L2 0.5L3.7 2.2" fill="none" stroke="#a8a8a8" stroke-width="0.6"/></svg>
<svg class="a" style="left:828.8000000000001px;top:472.2px;" width="6.8" height="4.6" viewBox="0 0 6.8 4.6"><path d="M0.3 2.3Q3.4 -0.9 6.5 2.3Q3.4 5.5 0.3 2.3Z" fill="none" stroke="#e2e2e2" stroke-width="0.9"/><circle cx="3.4" cy="2.3" r="1.2" fill="#e2e2e2"/></svg>
<div class="t" style="left:838.4px;top:471.29px;font-size:61.5px;line-height:61.5px;color:#d0d0d0;font-weight:normal;transform:scale(0.0780,0.1);">Effekte</div>
<svg class="a" style="left:837.3000000000001px;top:481.9px;" width="6.8" height="4.6" viewBox="0 0 6.8 4.6"><path d="M0.3 2.3Q3.4 -0.9 6.5 2.3Q3.4 5.5 0.3 2.3Z" fill="none" stroke="#e2e2e2" stroke-width="0.9"/><circle cx="3.4" cy="2.3" r="1.2" fill="#e2e2e2"/></svg>
<div class="t" style="left:846.5px;top:481.26px;font-size:62.2px;line-height:62.2px;color:#d0d0d0;font-weight:normal;transform:scale(0.0780,0.1);">Schlagschatten</div>
<div class="a" style="left:806px;top:488px;width:127px;height:0.6px;background:#4a4a4a;"></div>
<div class="a" style="left:805px;top:499.5px;width:140px;height:12.1px;background:#535353;"></div>
<svg class="a" style="left:845px;top:503.8px;" width="7.5" height="4" viewBox="0 0 7.5 4"><path d="M3 0.5H1.8Q0.4 0.5 0.4 2Q0.4 3.5 1.8 3.5H3M4.5 0.5H5.7Q7.1 0.5 7.1 2Q7.1 3.5 5.7 3.5H4.5M2.2 2H5.3" fill="none" stroke="#7a7a7a" stroke-width="0.7"/></svg>
<div class="t" style="left:858.5px;top:501.67px;font-size:74.4px;line-height:74.4px;color:#d8d8d8;font-weight:bold;transform:scale(0.0780,0.1);font-family:"Liberation Serif",serif"><i>fx</i></div>
<svg class="a" style="left:871px;top:502.5px;" width="7.5" height="6.5" viewBox="0 0 7.5 6.5"><rect x="0" y="0" width="7.5" height="6.5" rx="0.5" fill="#e0e0e0"/><circle cx="3.75" cy="3.25" r="1.7" fill="#535353"/></svg>
<svg class="a" style="left:885px;top:502.3px;" width="7.5" height="7.5" viewBox="0 0 7.5 7.5"><circle cx="3.5" cy="3.5" r="3" fill="none" stroke="#e0e0e0" stroke-width="0.8"/><path d="M5.6 1.4A3 3 0 0 1 1.4 5.6Z" fill="#e0e0e0"/><circle cx="6.6" cy="6.6" r="0.5" fill="#e0e0e0"/></svg>
<svg class="a" style="left:897.5px;top:502.8px;" width="7.5" height="5.6" viewBox="0 0 7.5 5.6"><path d="M0 0.5Q0 0 0.5 0H2.8L3.6 0.8H7Q7.5 0.8 7.5 1.3V5.1Q7.5 5.6 7 5.6H0.5Q0 5.6 0 5.1Z" fill="#e0e0e0"/><path d="M0 1.7H7.5" stroke="#535353" stroke-width="0.4"/></svg>
<svg class="a" style="left:911.5px;top:502.2px;" width="7" height="7" viewBox="0 0 7 7"><rect x="0.5" y="0.5" width="6" height="6" rx="0.6" fill="none" stroke="#d0d0d0" stroke-width="0.8"/><path d="M3.5 1.8V5.2M1.8 3.5H5.2" stroke="#d0d0d0" stroke-width="0.8"/></svg>
<svg class="a" style="left:924.4px;top:501.8px;" width="6" height="7.5" viewBox="0 0 6 7.5"><path d="M0 1.2H6M2 1.2V0.3H4V1.2M0.8 1.8H5.2L4.8 7.3H1.2Z" fill="none" stroke="#bdbdbd" stroke-width="0.7"/></svg>
<div class="a" style="left:253.3px;top:105px;width:298.4px;height:297.8px;background:#1a1a1a;"></div>
<svg class="a" style="left:254.3px;top:105.9px" width="296.4" height="295.9" viewBox="254.3 105.9 296.4 295.9">
<defs>
<linearGradient id="bg" x1="0" y1="0" x2="1" y2="1"><stop offset="0" stop-color="#f2f2f1"/><stop offset="0.5" stop-color="#f6f6f4"/><stop offset="1" stop-color="#f9f8f5"/></linearGradient>
<filter id="bl" x="-20%" y="-20%" width="140%" height="140%"><feGaussianBlur stdDeviation="0.5"/></filter>
<filter id="bl3" x="-50%" y="-50%" width="200%" height="200%"><feGaussianBlur stdDeviation="3"/></filter>
<filter id="bl2" x="-50%" y="-50%" width="200%" height="200%"><feGaussianBlur stdDeviation="5"/></filter>
<radialGradient id="lemon" cx="0.55" cy="0.45" r="0.62"><stop offset="0" stop-color="#f2ec7a"/><stop offset="0.55" stop-color="#e8dc38"/><stop offset="1" stop-color="#d2c018"/></radialGradient>
<radialGradient id="peachL" cx="0.3" cy="0.55" r="0.7"><stop offset="0" stop-color="#f0c838"/><stop offset="0.7" stop-color="#e0b020"/><stop offset="1" stop-color="#c89810"/></radialGradient>
<radialGradient id="peachR" cx="0.45" cy="0.5" r="0.6"><stop offset="0" stop-color="#e87030"/><stop offset="0.6" stop-color="#e05020"/><stop offset="1" stop-color="#c83818"/></radialGradient>
<radialGradient id="pear" cx="0.4" cy="0.5" r="0.65"><stop offset="0" stop-color="#f4dc50"/><stop offset="0.6" stop-color="#eccc30"/><stop offset="1" stop-color="#e0b420"/></radialGradient>
<radialGradient id="grape" cx="0.4" cy="0.4" r="0.7"><stop offset="0" stop-color="#c8e870"/><stop offset="0.6" stop-color="#8cc02c"/><stop offset="1" stop-color="#5a9418"/></radialGradient>
<radialGradient id="apple" cx="0.45" cy="0.45" r="0.65"><stop offset="0" stop-color="#d8ea78"/><stop offset="0.6" stop-color="#c2d844"/><stop offset="1" stop-color="#a0c028"/></radialGradient>
<linearGradient id="banana" x1="0" y1="0" x2="1" y2="1"><stop offset="0" stop-color="#f0e630"/><stop offset="0.5" stop-color="#ecdc18"/><stop offset="1" stop-color="#e0c808"/></linearGradient>
<radialGradient id="egg" cx="0.35" cy="0.35" r="0.75"><stop offset="0" stop-color="#6a58c8"/><stop offset="0.45" stop-color="#3a26a8"/><stop offset="1" stop-color="#22145c"/></radialGradient>
<radialGradient id="tom" cx="0.55" cy="0.4" r="0.7"><stop offset="0" stop-color="#f26a48"/><stop offset="0.6" stop-color="#e65234"/><stop offset="1" stop-color="#c83c22"/></radialGradient>
<radialGradient id="straw" cx="0.35" cy="0.45" r="0.7"><stop offset="0" stop-color="#d83848"/><stop offset="0.6" stop-color="#c0202e"/><stop offset="1" stop-color="#901420"/></radialGradient>
<radialGradient id="calyx" cx="0.5" cy="0.45" r="0.6"><stop offset="0" stop-color="#b89888"/><stop offset="0.7" stop-color="#957060"/><stop offset="1" stop-color="#7a5040"/></radialGradient>
</defs>
<rect x="254.3" y="105.9" width="296.4" height="295.9" fill="url(#bg)"/>
<rect x="254.3" y="105.9" width="2.5" height="295.9" fill="#e8e8e6"/><rect x="254.3" y="105.9" width="296.4" height="1" fill="#ffffff"/><rect x="549.7" y="105.9" width="1" height="295.9" fill="#ffffff"/>
<ellipse cx="380" cy="346" rx="90" ry="8" fill="#ebe8e2" filter="url(#bl2)" opacity="0.4"/>
<g filter="url(#bl)">
<!-- plate -->
<ellipse cx="393.5" cy="285" rx="122" ry="60" fill="#bfcdb2"/>
<ellipse cx="393.5" cy="281" rx="118" ry="55" fill="#dbe4cf"/>
<path d="M272 272Q275 300 300 318Q340 343 395 345Q460 343 500 312Q514 298 515 275" fill="none" stroke="#a9bc9c" stroke-width="1.6"/>
<!-- banana -->
<path d="M435 204Q441 197 455 198Q482 202 500 213Q518 225 528 240Q538 254 540.5 266Q538 272 531 271Q520 266 510 260Q495 253 482 248Q462 240 450 233Q437 228 434 218Q433 210 435 204Z" fill="url(#banana)"/>
<path d="M442 206Q470 206 498 220Q520 234 532 256" fill="none" stroke="#f6ee80" stroke-width="3.5" opacity="0.6"/>
<path d="M531 271Q538 272 540.5 266Q539 261 535 261Z" fill="#a8c040"/>
<!-- lemon -->
<path d="M276.2 226Q276 205 295 193Q305 188 311 189.7Q316 182 323.2 177.5Q324 188 327 195.4Q338 205 338.2 222.6Q338 245 325 255L285 255Q276 240 276.2 226Z" fill="url(#lemon)"/>
<path d="M306 191Q314 186 319 183Q321 178 323.2 177.5Q325 180 324 186Q326 191 329 196Q318 192 306 191Z" fill="#c4d494"/>
<ellipse cx="312" cy="215" rx="10" ry="8" fill="#efe780" opacity="0.55"/>
<!-- grapes left cluster -->
<path d="M343 228Q346 216 358 213Q364 206 372 206Q384 204 392 212L396 230L388 272H341Z" fill="#98cc40"/>
<path d="M398 200Q404 190 414 189Q426 186 432 194Q438 205 436 240L420 262H398Z" fill="#a4d24a"/>
<g fill="none" stroke="#6aa828" stroke-width="1" opacity="0.4">
<circle cx="350" cy="234" r="5.5"/><circle cx="362" cy="222" r="5.5"/><circle cx="376" cy="214" r="5.5"/><circle cx="353" cy="250" r="5.5"/><circle cx="367" cy="240" r="5.5"/><circle cx="382" cy="230" r="5"/><circle cx="357" cy="264" r="5"/><circle cx="372" cy="256" r="5"/>
<circle cx="416" cy="198" r="5"/><circle cx="429" cy="208" r="4.5"/><circle cx="420" cy="220" r="5"/><circle cx="430" cy="232" r="4.5"/><circle cx="406" cy="210" r="4.5"/>
</g>
<g fill="#d4ee90" opacity="0.8">
<ellipse cx="348" cy="232" rx="2.2" ry="1.5"/><ellipse cx="360" cy="220" rx="2.2" ry="1.5"/><ellipse cx="374" cy="212" rx="2.2" ry="1.5"/><ellipse cx="351" cy="248" rx="2.2" ry="1.5"/><ellipse cx="365" cy="238" rx="2.2" ry="1.5"/><ellipse cx="380" cy="228" rx="2" ry="1.4"/><ellipse cx="370" cy="254" rx="2" ry="1.4"/>
<ellipse cx="414" cy="196" rx="2" ry="1.4"/><ellipse cx="427" cy="206" rx="1.8" ry="1.2"/><ellipse cx="418" cy="218" rx="2" ry="1.4"/><ellipse cx="428" cy="230" rx="1.8" ry="1.2"/>
</g>
<!-- glass leaf -->
<path d="M366.5 179Q373 176 381 183Q393 194 398 210Q397 222 392 224Q380 222 371 208Q362 192 366.5 179Z" fill="#eef6e2" opacity="0.6"/>
<path d="M366.5 179Q373 176 381 183Q393 194 398 210Q397 222 392 224Q380 222 371 208Q362 192 366.5 179Z" fill="none" stroke="#9cc870" stroke-width="1.3" opacity="0.9"/>
<path d="M369 186Q380 200 392 222M373 195L383 190M377 204L389 198M381 212L392 207" fill="none" stroke="#a0c878" stroke-width="0.9" opacity="0.9"/>
<path d="M368 182Q376 184 384 192" fill="none" stroke="#ffffff" stroke-width="1" opacity="0.9"/>
<path d="M422.7 193.5Q410 205 396.4 218" fill="none" stroke="#98c860" stroke-width="2.6"/>
<path d="M421 194Q409 204 397 215" fill="none" stroke="#eef8e0" stroke-width="0.9"/>
<!-- green apple -->
<path d="M414 236Q425 224 445 226Q470 230 482 248Q488 265 480 282L430 290L414 270Z" fill="url(#apple)"/>
<!-- pear -->
<path d="M389 220Q395 216 401 221Q404 228 409.5 233Q418 246 418 270Q420 300 418 325Q400 336 378 332Q352 320 356 290Q360 262 377.6 241.4Q386 232 389 220Z" fill="url(#pear)"/>
<path d="M393 222Q394 212 396 204" fill="none" stroke="#d8ecb0" stroke-width="2" opacity="0.8"/>
<ellipse cx="396" cy="250" rx="6" ry="10" fill="#f4dc70" opacity="0.5"/>
<!-- peach -->
<clipPath id="pc"><path d="M275 262Q282 236 307 226.4Q318 224 326 228.3Q340 235 346.7 249Q354 262 350 290Q346 305 330 311Q320 312 300 309Q280 302 274 285Q272 273 275 262Z"/></clipPath>
<g clip-path="url(#pc)">
<rect x="270" y="220" width="90" height="95" fill="url(#peachL)"/>
<path d="M312 226Q336 228 350 250Q356 280 346 305Q338 312 332 306Q326 280 318 254Q312 238 312 226Z" fill="#e04a22" filter="url(#bl3)"/>
<ellipse cx="308" cy="284" rx="15" ry="24" fill="#e8702a" filter="url(#bl3)" opacity="0.9"/>
<path d="M322 232Q336 250 336 300M330 234Q344 252 344 295M314 230Q326 250 326 306" fill="none" stroke="#f08a60" stroke-width="1.3" opacity="0.35"/>
<ellipse cx="286" cy="270" rx="6" ry="14" fill="#f2d050" opacity="0.6" filter="url(#bl3)"/>
</g>
<path d="M292.5 218Q296 226 299 229Q306 230 313 235Q306 240 300 241Q298 245 295 244Q291 241 286 240Q288 235 291 231Q290 224 292.5 218Z" fill="#b9c2a4"/>
<ellipse cx="298" cy="235" rx="3" ry="2" fill="#d8dcc8"/>
<!-- eggplant -->
<path d="M454.3 287.2Q456 262 477 256.2Q497 252 508 265Q514 275 511.2 285Q510 305 490 311Q473 315 462 306Q454 298 454.3 287.2Z" fill="url(#egg)"/>
<ellipse cx="470" cy="272" rx="7" ry="4" fill="#8070d0" opacity="0.55" transform="rotate(-30 470 272)"/>
<path d="M493.6 260Q505 254 520.5 256.2Q515 262 512 266Q509 270 507 274Q498 266 493.6 260Z" fill="#b4c4aa"/>
<!-- tomato -->
<path d="M392.3 303.8Q394 283 425.4 281Q450 280 459.5 301.7Q462 318 450 324.4Q436 335 415 334.8Q396 332 392.3 318Q391 310 392.3 303.8Z" fill="url(#tom)"/>
<path d="M419 264.5Q421 275 425.4 283Q421 284 418 283Z" fill="#b08050"/>
<!-- strawberry -->
<path d="M323.8 311Q323 290 334 281.6Q345 276 358.7 277Q378 280 384 299.6Q386 318 372 328Q364 334 354.2 333.5Q338 332 329.4 326.7Q324 320 323.8 311Z" fill="url(#straw)"/>
<path d="M346 290Q349 278 362 277Q377 277 383 288Q388 300 383 311Q376 318 364 318Q350 316 346 305Q344 297 346 290Z" fill="url(#calyx)"/>
<g fill="none" stroke="#ead8d0" stroke-width="1" opacity="0.85"><path d="M354 290L360 293M368 284L367 290M378 291L372 294M376 306L371 302M362 311L364 305M352 302L358 300"/></g>
<!-- glass stem on banana -->
<path d="M461 188Q466 184 472 190Q482 202 484 218Q484 232 478 240Q470 236 465 222Q458 204 461 188Z" fill="#eef6e2" opacity="0.55"/>
<path d="M461 188Q466 184 472 190Q482 202 484 218Q484 232 478 240Q470 236 465 222Q458 204 461 188Z" fill="none" stroke="#a8c878" stroke-width="1.2" opacity="0.9"/>
<path d="M464 196Q472 210 478 236M467 204L474 200M470 213L479 208M473 222L482 218" fill="none" stroke="#a8c880" stroke-width="0.9"/>
<path d="M463 192Q468 196 472 204" fill="none" stroke="#ffffff" stroke-width="1"/>
<path d="M499 214Q490 222 480 232" fill="none" stroke="#98c860" stroke-width="2.2"/>
<path d="M476 238Q474 248 470 258" fill="none" stroke="#90b850" stroke-width="3" opacity="0.8"/>
</g>
</svg>
<div class="a" style="left:294.7px;top:430.6px;width:215.1px;height:16.6px;background:#474747;border:0.6px solid #3a3a3a;border-radius:2px;box-shadow:0 0 2px rgba(0,0,0,0.5)"></div>
<div class="a" style="left:296.4px;top:432.6px;width:1.7px;height:12.8px;background:#e8e8e8;border-radius:0.5px"></div>
<div class="a" style="left:301.6px;top:431.6px;width:67.6px;height:14.7px;background:#4b4b4b;border:0.7px solid #5d5d5d;border-radius:2px"></div>
<svg class="a" style="left:307.5px;top:435.5px;" width="6.5" height="6.5" viewBox="0 0 6.5 6.5"><circle cx="3.25" cy="2" r="1.5" fill="#e0e0e0"/><path d="M0.6 5.4Q0.8 3.6 3.25 3.6Q5.7 3.6 5.9 5.4Z" fill="#e0e0e0"/><rect x="0" y="5.6" width="6.5" height="0.8" fill="#e0e0e0"/></svg>
<div class="t" style="left:316.8px;top:434.68px;font-size:78.2px;line-height:78.2px;color:#e4e4e4;font-weight:normal;transform:scale(0.0780,0.1);">Motiv auswählen</div>
<div class="a" style="left:370.3px;top:431.6px;width:83px;height:14.7px;background:#4b4b4b;border:0.7px solid #5d5d5d;border-radius:2px"></div>
<svg class="a" style="left:375.8px;top:435.3px;" width="8" height="6.8" viewBox="0 0 8 6.8"><rect x="0.4" y="0.4" width="7.2" height="6" fill="none" stroke="#e0e0e0" stroke-width="0.8"/><path d="M0.8 6L3 3.5L4.5 5L5.5 4L7.2 6Z" fill="#e0e0e0"/><circle cx="5.5" cy="2.2" r="0.7" fill="#e0e0e0"/></svg>
<div class="t" style="left:386.6px;top:434.68px;font-size:78.2px;line-height:78.2px;color:#e4e4e4;font-weight:normal;transform:scale(0.0780,0.1);">Hintergrund entfernen</div>
<svg class="a" style="left:459.5px;top:435px;" width="8" height="8" viewBox="0 0 8 8"><rect x="1.2" y="1.5" width="5.5" height="5.3" fill="none" stroke="#d8d8d8" stroke-width="0.6"/><circle cx="1.2" cy="1.5" r="0.9" fill="#d8d8d8"/><circle cx="1.2" cy="6.8" r="0.9" fill="#d8d8d8"/><circle cx="6.7" cy="6.8" r="0.9" fill="#d8d8d8"/><path d="M3.5 0.5L6.5 1L5.5 3.5Z" fill="#d8d8d8"/></svg>
<svg class="a" style="left:478.3px;top:435px;" width="8" height="8" viewBox="0 0 8 8"><circle cx="4" cy="4" r="3.4" fill="#e0e0e0"/><path d="M6.4 1.6A3.4 3.4 0 0 1 1.6 6.4Z" fill="#555"/><circle cx="4" cy="4" r="3.4" fill="none" stroke="#e0e0e0" stroke-width="0.8"/></svg>
<svg class="a" style="left:497px;top:438.2px;" width="8" height="2" viewBox="0 0 8 2"><circle cx="1" cy="1" r="0.9" fill="#e0e0e0"/><circle cx="4" cy="1" r="0.9" fill="#e0e0e0"/><circle cx="7" cy="1" r="0.9" fill="#e0e0e0"/></svg>
<div class="a" style="left:0;top:511.6px;width:945px;height:20.4px;background:linear-gradient(90deg,#1c3541 0%,#21363f 45%,#212f3e 65%,#1d2a44 85%,#1c2846 100%)"></div>
<svg class="a" style="left:8.2px;top:518.2px;" width="8" height="8" viewBox="0 0 8 8"><path d="M0 1.1L3.4 0.6V3.7H0ZM3.9 0.5L8 0V3.7H3.9ZM0 4.2H3.4V7.4L0 6.9ZM3.9 4.2H8V8L3.9 7.5Z" fill="#f4f4f4"/></svg>
<div class="a" style="left:23.3px;top:512px;width:142.4px;height:20px;background:#f2f2f2;"></div>
<svg class="a" style="left:28.5px;top:516.8px;" width="8" height="8" viewBox="0 0 8 8"><circle cx="5" cy="3" r="2.4" fill="none" stroke="#333" stroke-width="0.8"/><path d="M3.3 4.7L0.6 7.4" stroke="#333" stroke-width="0.9"/></svg>
<div class="t" style="left:43.2px;top:517.72px;font-size:89.7px;line-height:89.7px;color:#404040;font-weight:normal;transform:scale(0.0780,0.1);">Suchen</div>
<svg class="a" style="left:125px;top:512px;" width="41" height="20" viewBox="0 0 41 20"><path d="M0 20Q10 14 22 13Q34 12 41 14V20Z" fill="#6ba33a"/><path d="M6 20Q18 16 30 16Q38 16 41 17V20Z" fill="#4f8a2a"/><path d="M15 17L17 8H20L22 17Z" fill="#c9b89a"/><path d="M18.5 9L10 2M18.5 9L25 2.5M18.5 9L12 16M18.5 9L24 14" stroke="#8a7050" stroke-width="1"/><rect x="16.5" y="7" width="4" height="2.5" fill="#6a5a4a"/></svg>
<svg class="a" style="left:172.7px;top:518.3px;" width="9" height="7.6" viewBox="0 0 9 7.6"><rect x="1.5" y="1.2" width="5.5" height="5.2" fill="none" stroke="#e8e8e8" stroke-width="0.9"/><path d="M0.2 0.3H1.5M0.2 7.3H1.5M8.5 0.3V7.3" stroke="#e8e8e8" stroke-width="0.8"/></svg>
<svg class="a" style="left:196.2px;top:516.3px;" width="11.5" height="11.5" viewBox="0 0 11.5 11.5"><defs><linearGradient id="g1" x1="0" y1="0" x2="1" y2="1"><stop offset="0" stop-color="#f2a52a"/><stop offset="0.6" stop-color="#e8602a"/><stop offset="1" stop-color="#d1c23a"/></linearGradient></defs><circle cx="5.75" cy="5.75" r="5.5" fill="url(#g1)"/><circle cx="5.75" cy="5.75" r="3" fill="#f6f0e0"/><path d="M3.8 4.5L5.75 8L7.7 4.5Z" fill="#8a4aa0"/></svg>
<svg class="a" style="left:220.5px;top:516.3px;" width="11.5" height="11.5" viewBox="0 0 11.5 11.5"><defs><linearGradient id="g2" x1="0" y1="0" x2="1" y2="1"><stop offset="0" stop-color="#8e6ae8"/><stop offset="1" stop-color="#3b8ee8"/></linearGradient></defs><path d="M5.75 0.3L10.8 3V8.5L5.75 11.2L0.7 8.5V3Z" fill="url(#g2)"/><path d="M4.2 3.4L8.2 5.75L4.2 8.1Z" fill="#2a2a66"/></svg>
<svg class="a" style="left:245px;top:516.5px;" width="11" height="10" viewBox="0 0 11 10"><path d="M0 1Q0 0.3 0.7 0.3H4L5 1.3H10.3Q11 1.3 11 2V9.3Q11 10 10.3 10H0.7Q0 10 0 9.3Z" fill="#f3c33c"/><rect x="0" y="3" width="11" height="7" fill="#f8d45c"/><rect x="2.5" y="6" width="6" height="2" fill="#3a8ad8"/></svg>
<svg class="a" style="left:268.8px;top:516.3px;" width="11.5" height="11.5" viewBox="0 0 11.5 11.5"><defs><linearGradient id="g3" x1="0" y1="0" x2="1" y2="1"><stop offset="0" stop-color="#35c1f1"/><stop offset="0.5" stop-color="#1f8fe0"/><stop offset="1" stop-color="#3cc26a"/></linearGradient></defs><circle cx="5.75" cy="5.75" r="5.5" fill="url(#g3)"/><path d="M3.5 7.2Q3.5 4.6 6.2 4.6Q8.8 4.6 8.8 6.4H4.8" fill="none" stroke="#1b3040" stroke-width="1.4"/></svg>
<svg class="a" style="left:293.3px;top:516.5px;" width="11" height="11" viewBox="0 0 11 11"><ellipse cx="5.5" cy="5.5" rx="5.3" ry="5.3" fill="#e3202e"/><ellipse cx="5.5" cy="5.5" rx="2.2" ry="3.6" fill="#1b3044"/></svg>
<svg class="a" style="left:318.7px;top:516.5px;" width="8.5" height="10.5" viewBox="0 0 8.5 10.5"><path d="M0 0H6L8.5 2.5V10.5H0Z" fill="#f6f6f6"/></svg>
<div class="a" style="left:335.2px;top:512px;width:23.5px;height:20px;background:#3b4d5a;"></div>
<div class="a" style="left:335.2px;top:530.6px;width:23.5px;height:1.4px;background:#9dc7ea;"></div>
<div class="a" style="left:342px;top:517px;width:10.4px;height:9.6px;background:#001e36;border-radius:1.5px"></div>
<div class="t" style="left:343.3px;top:517.64px;font-size:76.9px;line-height:76.9px;color:#31a8ff;font-weight:bold;transform:scale(0.0780,0.1);">Ps</div>
<svg class="a" style="left:365.3px;top:516.5px;" width="12" height="12" viewBox="0 0 12 12"><circle cx="5.5" cy="5.5" r="5.3" fill="#db4437"/><path d="M5.5 5.5L10.1 8.1A5.3 5.3 0 0 1 2 9.6Z" fill="#0f9d58"/><path d="M5.5 5.5L0.9 8.1A5.3 5.3 0 0 1 1 2.9L5.5 5.5Z" fill="#0f9d58"/><path d="M5.5 0.2A5.3 5.3 0 0 1 10.6 5L5.5 5.5Z" fill="#f4b400"/><circle cx="5.5" cy="5.5" r="2.4" fill="#f4f4f4"/><circle cx="5.5" cy="5.5" r="1.7" fill="#4285f4"/><circle cx="9" cy="9" r="2.6" fill="#2a8de6"/><path d="M8 9.3L9 8.2L10 9.3" fill="none" stroke="#fff" stroke-width="0.6"/></svg>
<div class="a" style="left:361.3px;top:530.6px;width:19.7px;height:1.4px;background:#7fa4c4;"></div>
<svg class="a" style="left:691px;top:517px;" width="10" height="9" viewBox="0 0 10 9"><circle cx="6.8" cy="2.2" r="1.6" fill="none" stroke="#d8d8d8" stroke-width="0.7"/><path d="M4.4 6.4Q4.6 4.2 6.8 4.2Q9 4.2 9.2 6.2" fill="none" stroke="#d8d8d8" stroke-width="0.7"/><circle cx="3" cy="4.3" r="1.5" fill="none" stroke="#d8d8d8" stroke-width="0.7"/><path d="M0.6 8.6Q0.8 6.3 3 6.3Q5.2 6.3 5.4 8.6" fill="none" stroke="#d8d8d8" stroke-width="0.7"/></svg>
<svg class="a" style="left:727px;top:515.5px;" width="13" height="13" viewBox="0 0 13 13"><circle cx="5.6" cy="7" r="5" fill="#f0a830"/><path d="M5 10.8Q3 10.8 3 9.3Q3 7.9 4.7 7.8Q5.2 6.2 7.2 6.2Q9.3 6.2 9.6 8Q11 8.2 11 9.4Q11 10.8 9.5 10.8Z" fill="#eaeef4"/><circle cx="9" cy="2.8" r="2.5" fill="#e83a2a"/><rect x="8.6" y="1.3" width="0.8" height="2" fill="#fff"/></svg>
<div class="t" style="left:742.4px;top:517.37px;font-size:84.6px;line-height:84.6px;color:#e8e8e8;font-weight:normal;transform:scale(0.0780,0.1);">12°C</div>
<div class="t" style="left:762.5px;top:517.37px;font-size:84.6px;line-height:84.6px;color:#e8e8e8;font-weight:normal;transform:scale(0.0780,0.1);">Meist sonnig</div>
<svg class="a" style="left:812.2px;top:519.5px;" width="7" height="4" viewBox="0 0 7 4"><path d="M0.5 3.5L3.5 0.5L6.5 3.5" fill="none" stroke="#e0e0e0" stroke-width="0.8"/></svg>
<svg class="a" style="left:822.5px;top:516.8px;" width="10" height="9" viewBox="0 0 10 9"><rect x="2.5" y="0.6" width="7" height="5" fill="none" stroke="#e0e0e0" stroke-width="0.8"/><path d="M6 5.6V7.5M4 7.8H8" stroke="#e0e0e0" stroke-width="0.8"/><rect x="0" y="2" width="2.6" height="6.5" fill="#e0e0e0"/></svg>
<svg class="a" style="left:836px;top:516.8px;" width="7" height="9" viewBox="0 0 7 9"><rect x="0.5" y="2.5" width="6" height="4" fill="none" stroke="#e0e0e0" stroke-width="0.8"/><path d="M1 0.8H6M1 8.3H6" stroke="#e0e0e0" stroke-width="0.8"/><rect x="2" y="3.5" width="3" height="2" fill="#e0e0e0"/></svg>
<svg class="a" style="left:846.5px;top:518px;" width="8" height="8" viewBox="0 0 8 8"><path d="M0.3 2.8H2L4 0.8V7.2L2 5.2H0.3Z" fill="none" stroke="#e0e0e0" stroke-width="0.7"/><path d="M5.5 2.2Q6.5 4 5.5 5.8M6.8 1.2Q8.3 4 6.8 6.8" fill="none" stroke="#d0d0d0" stroke-width="0.6"/></svg>
<svg class="a" style="left:857.5px;top:518px;" width="9" height="8" viewBox="0 0 9 8"><path d="M0.5 2.5L2 1.5L3 3H8.5V7.5H0.5Z" fill="#e8e8e8"/><path d="M5.5 0.5V2.8" stroke="#e8e8e8" stroke-width="0.8"/></svg>
<div class="t" style="left:871.3px;top:517.24px;font-size:76.9px;line-height:76.9px;color:#e8e8e8;font-weight:normal;transform:scale(0.0780,0.1);">DEU</div>
<div class="t" style="left:896.5px;top:512.94px;font-size:76.9px;line-height:76.9px;color:#e8e8e8;font-weight:normal;transform:scale(0.0780,0.1);">14:00</div>
<div class="t" style="left:889px;top:522.04px;font-size:76.9px;line-height:76.9px;color:#e8e8e8;font-weight:normal;transform:scale(0.0780,0.1);">28.10.2023</div>
<svg class="a" style="left:923.8px;top:515px;" width="14" height="14" viewBox="0 0 14 14"><path d="M1.5 1H10.5V7.8H5L2.8 9.8V7.8H1.5Z" fill="none" stroke="#e8e8e8" stroke-width="0.9"/><path d="M3.5 3.3H8.5M3.5 5.3H8.5" stroke="#e8e8e8" stroke-width="0.7"/><circle cx="9.8" cy="9.8" r="3.3" fill="#1c2a46" stroke="#e8e8e8" stroke-width="0.6"/><text x="8.5" y="11.6" font-size="4.8" font-family="Liberation Sans" fill="#fff">9</text></svg>
<div class="a" style="left:942.5px;top:512px;width:0.8px;height:20px;background:#3a4a60;"></div></body></html>
